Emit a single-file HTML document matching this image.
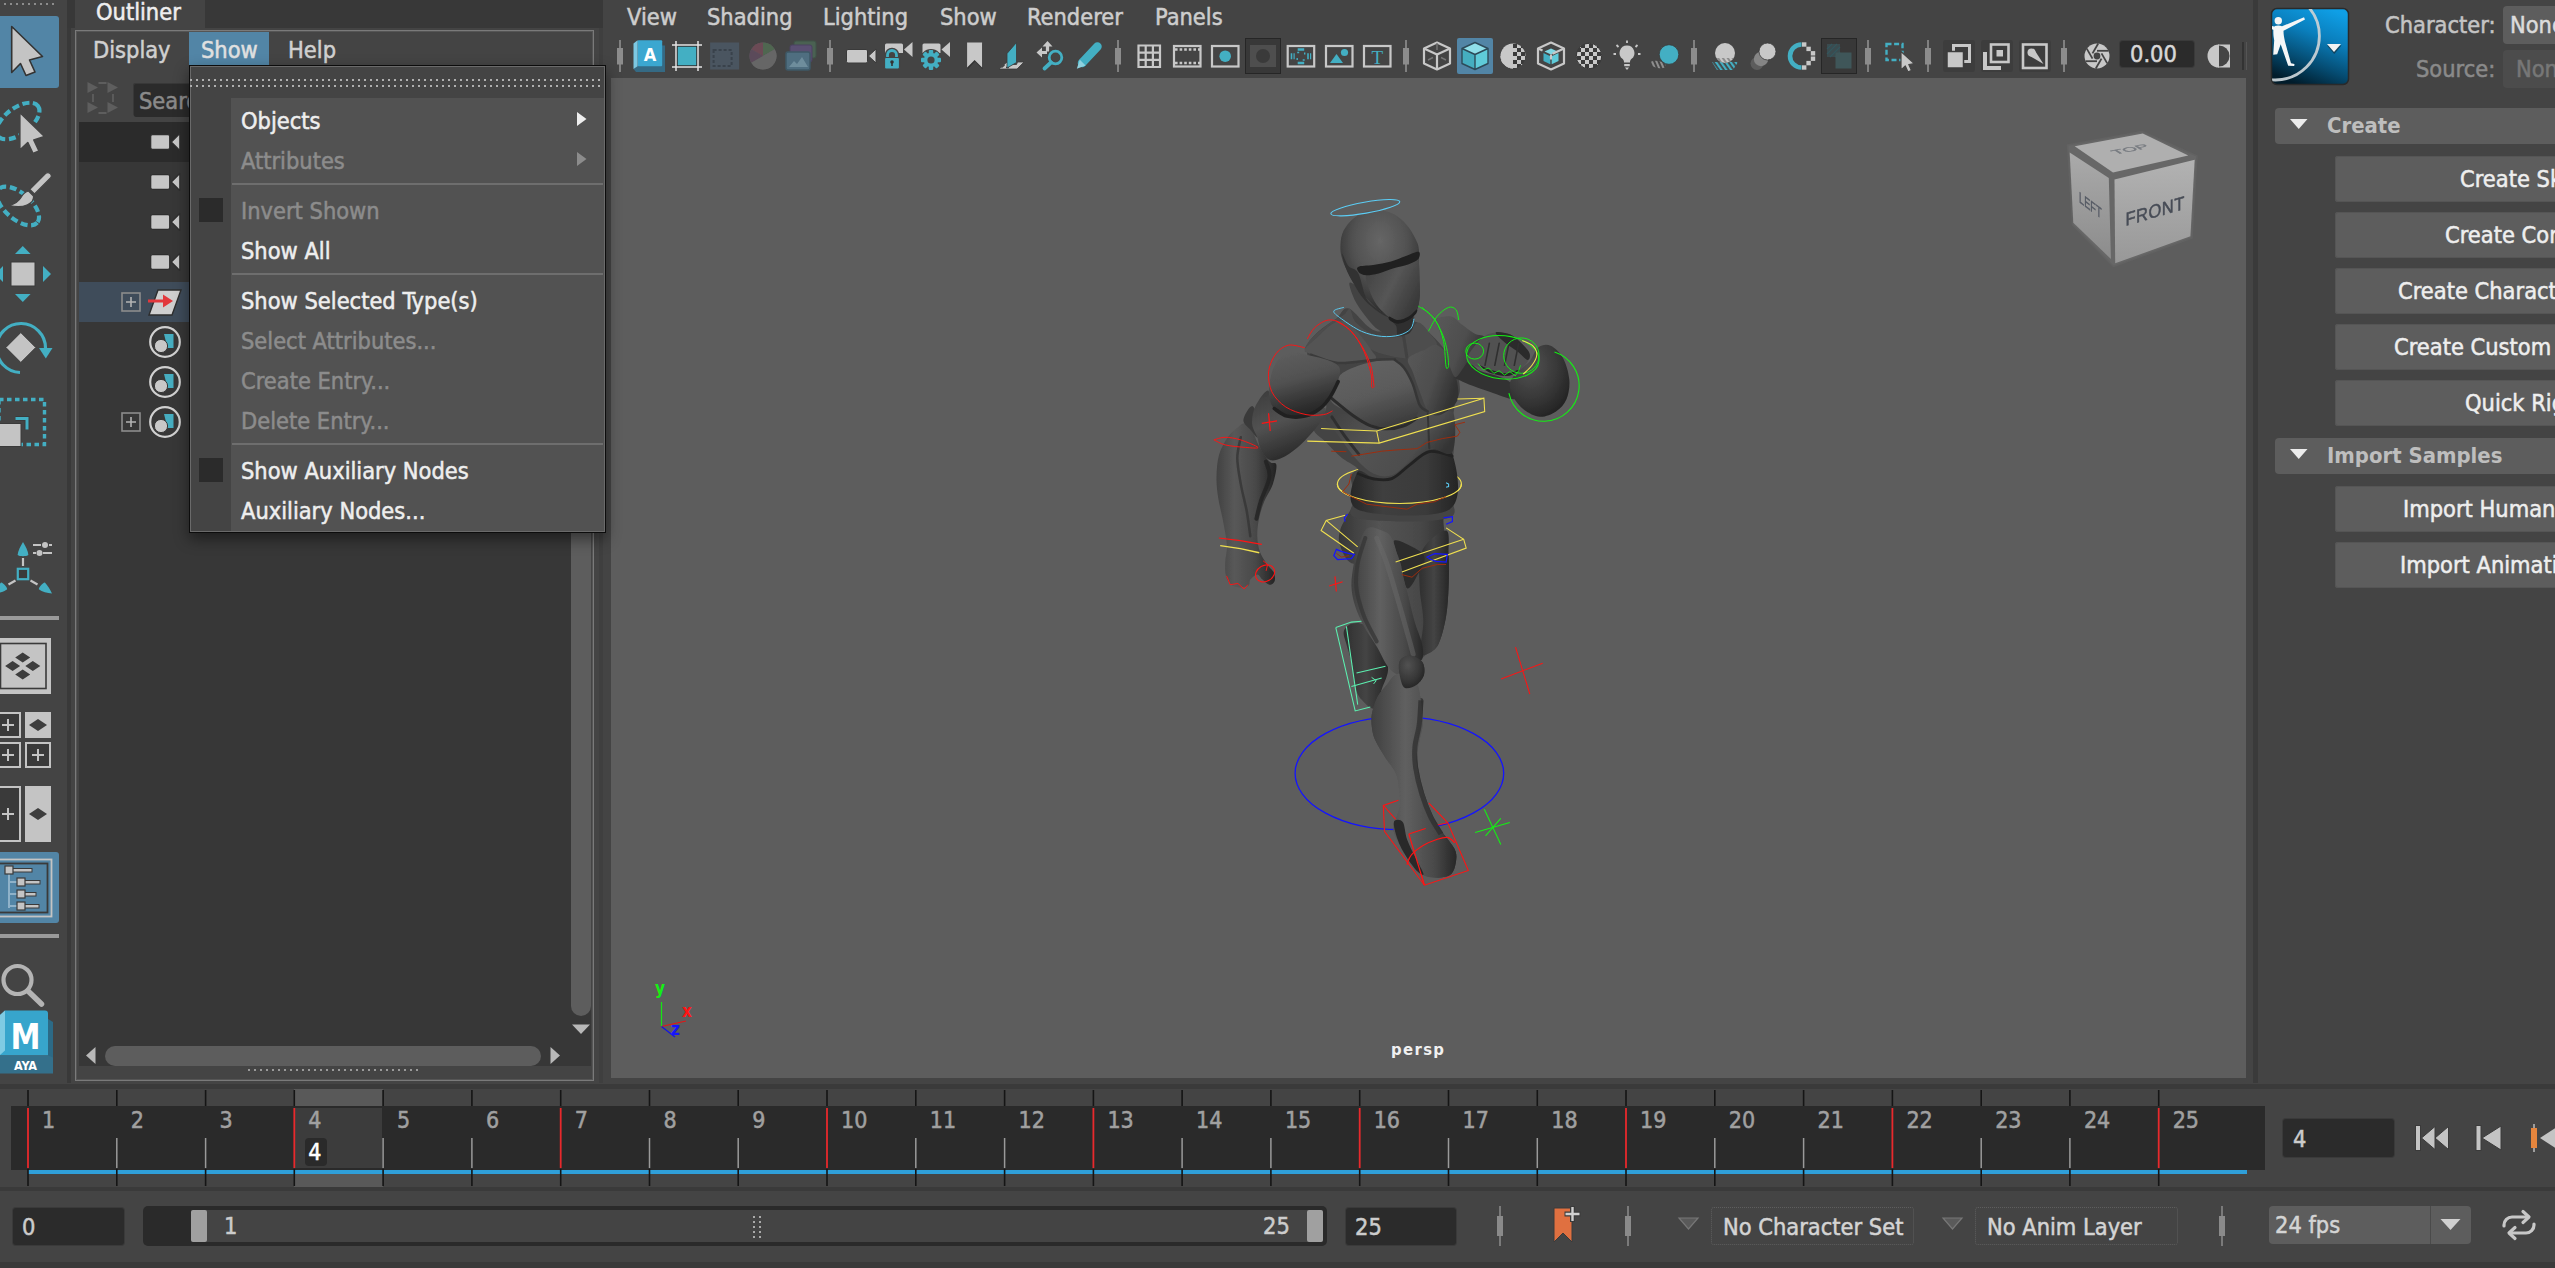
<!DOCTYPE html>
<html lang="en"><head><meta charset="utf-8"><title>Maya - Outliner Show menu</title>
<style>
*{box-sizing:border-box;margin:0;padding:0}
html,body{width:2555px;height:1268px;overflow:hidden;background:#444}
body{position:relative;font-family:"DejaVu Sans Condensed","DejaVu Sans","Liberation Sans",sans-serif;font-stretch:condensed;font-size:23.4px;color:#ccc;line-height:1;-webkit-text-stroke:.5px}
.a{position:absolute}
.t{position:absolute;white-space:nowrap;line-height:28px;height:28px}
svg{position:absolute;overflow:visible}
.btn{position:absolute;left:2335px;width:260px;height:46px;background:#5d5d5d;border-radius:3px;box-shadow:0 0 0 1px #555 inset}
.btn span{position:absolute;top:9px;white-space:nowrap;color:#eee;line-height:28px}
.mi{position:absolute;left:241px;white-space:nowrap;line-height:28px;color:#eee}
.mi.d{color:#8c8c8c}
.msep{position:absolute;left:232px;width:371px;height:2px;background:#6e6e6e}
.fn{position:absolute;top:1106px;color:#a0a0a0;font-size:23px;line-height:28px;white-space:nowrap}
.fld{position:absolute;background:#2b2b2b;border-radius:3px;color:#ccc}
</style></head><body>
<!-- ===== base panels ===== -->
<div class="a" style="left:67px;top:0;width:4px;height:1083px;background:#393939"></div>
<div class="a" style="left:67px;top:0;width:536px;height:28px;background:#383838"></div>
<div class="a" style="left:75px;top:0;width:130px;height:28px;background:#444"></div>
<div class="t" style="left:96px;top:-2px;color:#eee">Outliner</div>
<div class="a" style="left:599px;top:28px;width:4px;height:1055px;background:#3f3f3f"></div>
<div class="a" style="left:603px;top:0;width:1650px;height:1083px;background:#444"></div>
<!-- outliner frame -->
<div class="a" style="left:75px;top:30px;width:519px;height:1051px;border:1px solid #7a7a7a;box-shadow:0 0 0 1px #555 inset"></div>
<!-- viewport -->
<div class="a" id="vp" style="left:611px;top:78px;width:1635px;height:1000px;background:#5d5d5d"></div>
<!-- right divider -->
<div class="a" style="left:2253px;top:0;width:5px;height:1083px;background:#3a3a3a"></div>
<!-- band under panels -->
<div class="a" style="left:0;top:1084px;width:2555px;height:5px;background:#3a3a3a"></div>
<div class="a" style="left:0;top:1187px;width:2555px;height:4px;background:#3a3a3a"></div>
<div class="a" style="left:0;top:1262px;width:2555px;height:6px;background:#3a3a3a"></div>
<!-- ===== Tool box ===== -->
<div class="a" style="left:0;top:3px;width:56px;height:2px;background:repeating-linear-gradient(90deg,transparent 0 4px,#8c8c8c 4px 6px)"></div>
<div class="a" style="left:0;top:16px;width:59px;height:72px;background:#5285a6;border-radius:0 3px 3px 0"></div>
<div class="a" style="left:0;top:852px;width:59px;height:71px;background:#5285a6;border-radius:0 3px 3px 0"></div>
<div class="a" style="left:0;top:616px;width:59px;height:4px;background:#9a9a9a"></div>
<div class="a" style="left:0;top:934px;width:59px;height:4px;background:#9a9a9a"></div>
<svg style="left:0;top:0" width="67" height="1083" viewBox="0 0 67 1083"><path d="M11.700 26.500V72.500L20.500 63.500 26 75.500 35 72 29.500 60 42.500 56.500Z" fill="#c4c4c4" stroke="#333" stroke-width="1.6" stroke-linejoin="round"/><ellipse cx="18" cy="121" rx="25" ry="13" transform="rotate(-37 18 121)" fill="none" stroke="#43afc3" stroke-width="4.200" stroke-dasharray="7 3.500" stroke-linecap="butt"/><path d="M19.800 112.500V150L27.800 142.500 33 153.500 39 151 33.800 140 44.500 136.500Z" fill="#c4c4c4" stroke="#444" stroke-width="1.600" stroke-linejoin="round"/><ellipse cx="18" cy="206" rx="25.500" ry="13" transform="rotate(41 18 206)" fill="none" stroke="#43afc3" stroke-width="4.200" stroke-dasharray="7 3.500"/><path d="M45.500 173.500a3.300 3.300 0 0 1 4.700 4.700L34.500 194l-4.700-4.700z" fill="#c4c4c4" stroke="#444" stroke-width="1.200"/><path d="M28.500 191l5 5c1 7-9 13-24 9.500 6.500-2 9.500-4.500 11.500-8 2-3.500 4.500-6 7.500-6.500z" fill="#c4c4c4" stroke="#444" stroke-width="1.200"/><rect x="11" y="262" width="24" height="24" fill="#c4c4c4" stroke="#3a3a3a" stroke-width="1"/><g fill="#43afc3"><path d="M15 254h15.600l-7.800-8zM15 294h15.600l-7.800 8zM43 266v16l8-8zM3 266v16l-8-8z"/></g><path d="M20 372.500A24.500 24.500 0 1 1 45.500 348" fill="none" stroke="#43afc3" stroke-width="3.200"/><path d="M39 348h13.500l-6.700 10.500z" fill="#43afc3"/><path d="M20.800 332.500l15 15-15 15-15-15z" fill="#c4c4c4" stroke="#3a3a3a" stroke-width="1"/><rect x="-1" y="399.500" width="45.500" height="45" fill="none" stroke="#43afc3" stroke-width="3.400" stroke-dasharray="4.500 3.500"/><rect x="-1" y="423.500" width="22" height="23" fill="#c4c4c4" stroke="#3a3a3a" stroke-width="1"/><path d="M15.500 418.500h11.500v11" fill="none" stroke="#3a3a3a" stroke-width="5"/><path d="M15.500 418.500h11.500v11" fill="none" stroke="#43afc3" stroke-width="3"/><path d="M23 558v8M30.500 580.500l7 4M15.500 580.500l-7 4" stroke="#c4c4c4" stroke-width="2.200"/><rect x="17.800" y="568.800" width="10.400" height="10.400" fill="#3a3a3a" stroke="#43afc3" stroke-width="2.200"/><g fill="#43afc3"><path d="M23 542c2.500 4 5 9 5.400 13-2 1.600-8.800 1.600-10.800 0 .4-4 2.900-9 5.400-13z"/><path d="M52 593.500c-4.700-.2-10-1.800-13.200-4.200.300-2.600 3.700-6.200 6.100-6.800 2.700 3 5.600 7.300 7.100 11z"/><path d="M-6 593.500c4.700-.2 10-1.800 13.200-4.200-.300-2.600-3.700-6.200-6.100-6.800-2.700 3-5.600 7.300-7.100 11z"/></g><g stroke="#c4c4c4" stroke-width="2"><path d="M33 545h8M49 545h3M33 553h3M43 553h9"/></g><circle cx="45" cy="545" r="3" fill="#c4c4c4"/><circle cx="39.500" cy="553" r="3" fill="#c4c4c4"/><rect x="-2" y="638" width="53" height="56" fill="#c4c4c4"/><rect x="0.500" y="643.500" width="45.500" height="45" fill="none" stroke="#3a3a3a" stroke-width="1.600"/><g fill="#3d3d3d"><path d="M22.700 652.500l7.500 5-7.500 5-7.500-5zM22.700 669.500l7.500 5-7.500 5-7.500-5zM12.600 661l7.500 5-7.500 5-7.500-5zM32.800 661l7.500 5-7.500 5-7.500-5z"/></g><rect x="-4" y="713" width="24" height="24" fill="#3a3a3a" stroke="#c4c4c4" stroke-width="2"/><path d="M2.0 725.0h12M8.0 719.0v12" stroke="#c4c4c4" stroke-width="2"/><rect x="25" y="712" width="26" height="26" fill="#c4c4c4"/><path d="M38 719l9 6-9 6-9-6z" fill="#3d3d3d"/><rect x="-4" y="743" width="24" height="24" fill="#3a3a3a" stroke="#c4c4c4" stroke-width="2"/><path d="M2.0 755.0h12M8.0 749.0v12" stroke="#c4c4c4" stroke-width="2"/><rect x="26" y="743" width="24" height="24" fill="#3a3a3a" stroke="#c4c4c4" stroke-width="2"/><path d="M32.0 755.0h12M38.0 749.0v12" stroke="#c4c4c4" stroke-width="2"/><rect x="-4" y="787" width="24" height="54" fill="#3a3a3a" stroke="#c4c4c4" stroke-width="2"/><path d="M2.0 814.0h12M8.0 808.0v12" stroke="#c4c4c4" stroke-width="2"/><rect x="25" y="786" width="26" height="56" fill="#c4c4c4"/><path d="M38 808l9 6-9 6-9-6z" fill="#3d3d3d"/><rect x="-3" y="859.500" width="54.500" height="57" fill="none" stroke="#c4c4c4" stroke-width="1.800"/><rect x="-3" y="863.500" width="50.500" height="49" fill="none" stroke="#3a3a3a" stroke-width="1.800"/><path d="M9 872v36M9 882h8M9 894h8M9 906h8" fill="none" stroke="#8fb2c9" stroke-width="2"/><rect x="12" y="868.5" width="20" height="3.500" fill="#c4c4c4" stroke="#3a3a3a" stroke-width="1"/><rect x="5" y="866" width="8" height="8" fill="#c4c4c4" stroke="#3a3a3a" stroke-width="1.200"/><rect x="24" y="880.5" width="16" height="3.500" fill="#c4c4c4" stroke="#3a3a3a" stroke-width="1"/><rect x="17" y="878" width="8" height="8" fill="#c4c4c4" stroke="#3a3a3a" stroke-width="1.200"/><rect x="24" y="892.5" width="12" height="3.500" fill="#c4c4c4" stroke="#3a3a3a" stroke-width="1"/><rect x="17" y="890" width="8" height="8" fill="#c4c4c4" stroke="#3a3a3a" stroke-width="1.200"/><rect x="24" y="904.5" width="15" height="3.500" fill="#c4c4c4" stroke="#3a3a3a" stroke-width="1"/><rect x="17" y="902" width="8" height="8" fill="#c4c4c4" stroke="#3a3a3a" stroke-width="1.200"/><circle cx="17.500" cy="980" r="14" fill="none" stroke="#b4b4b4" stroke-width="4.200"/><path d="M28 991l13.500 13" stroke="#b4b4b4" stroke-width="5.500" stroke-linecap="round"/><path d="M0 1015l5-4.500h40a3 3 0 0 1 3 3v42h-48z" fill="#37a5cc"/><path d="M48 1019l5 3v51h-5z" fill="#2c6a86"/><path d="M0 1015l5-4.500v40l-5 4.500z" fill="#7fcbe3"/><path d="M0 1055.500h48l5 2v16h-53z" fill="#34708b"/><text x="25.500" y="1049" font-family="DejaVu Sans,Liberation Sans,sans-serif" font-weight="bold" font-size="35" text-anchor="middle" fill="#fff" textLength="30" lengthAdjust="spacingAndGlyphs">M</text><text x="25.500" y="1070" font-family="DejaVu Sans,Liberation Sans,sans-serif" font-weight="bold" font-size="12.500" text-anchor="middle" fill="#fff">AYA</text></svg>
<!-- ===== Outliner ===== -->
<div class="t" style="left:93px;top:35.500px;color:#d0d0d0">Display</div>
<div class="a" style="left:189px;top:32px;width:80px;height:33px;background:#5285a6"></div>
<div class="t" style="left:201px;top:35.500px;color:#e0e0e0">Show</div>
<div class="t" style="left:288px;top:35.500px;color:#d0d0d0">Help</div>
<svg style="left:86px;top:80px" width="34" height="36" viewBox="0 0 34 36"><g fill="#5e5e5e"><path d="M1.500 2l10.500 5.500-10.500 5.500zM21.500 2l10.500 5.500-10.500 5.500zM1.500 22l10.500 5.500-10.500 5.500zM21.500 22l10.500 5.500-10.500 5.500z"/></g><path d="M12.500 3h8M12.500 33h8M7 14v8M27 14v8" stroke="#5e5e5e" stroke-width="1.800" fill="none"/></svg>
<div class="a" style="left:134px;top:84px;width:440px;height:33px;background:#2b2b2b;border-radius:2px;box-shadow:-1px -1px 0 0 #383838"></div>
<div class="t" style="left:139px;top:87.300px;color:#8a8a8a">Search...</div>
<div class="a" style="left:79px;top:122px;width:492px;height:920px;background:#373737"></div>
<div class="a" style="left:79px;top:122px;width:492px;height:40px;background:#2b2b2b"></div>
<div class="a" style="left:79px;top:282px;width:492px;height:40px;background:#3f4c5a"></div>
<div class="t" style="left:196px;top:126px;color:#ccc">persp</div>
<div class="t" style="left:196px;top:166px;color:#ccc">top</div>
<div class="t" style="left:196px;top:206px;color:#ccc">front</div>
<div class="t" style="left:196px;top:246px;color:#ccc">side</div>
<div class="t" style="left:196px;top:286px;color:#eee">Character1_Ctrl_Reference</div>
<div class="t" style="left:196px;top:326px;color:#ccc">defaultLightSet</div>
<div class="t" style="left:196px;top:366px;color:#ccc">defaultObjectSet</div>
<div class="t" style="left:196px;top:406px;color:#ccc">Character1_Ctrl</div>
<svg style="left:149px;top:132px" width="34" height="20" viewBox="0 0 34 20"><rect x="1.700" y="2.600" width="19" height="14.800" rx="1.800" fill="#c6c6c6" stroke="#2e2e2e" stroke-width="1.200"/><path d="M22.300 10l8.500-8.500v17z" fill="#c6c6c6" stroke="#2e2e2e" stroke-width="1.200" stroke-linejoin="round"/></svg>
<svg style="left:149px;top:172px" width="34" height="20" viewBox="0 0 34 20"><rect x="1.700" y="2.600" width="19" height="14.800" rx="1.800" fill="#c6c6c6" stroke="#2e2e2e" stroke-width="1.200"/><path d="M22.300 10l8.500-8.500v17z" fill="#c6c6c6" stroke="#2e2e2e" stroke-width="1.200" stroke-linejoin="round"/></svg>
<svg style="left:149px;top:212px" width="34" height="20" viewBox="0 0 34 20"><rect x="1.700" y="2.600" width="19" height="14.800" rx="1.800" fill="#c6c6c6" stroke="#2e2e2e" stroke-width="1.200"/><path d="M22.300 10l8.500-8.500v17z" fill="#c6c6c6" stroke="#2e2e2e" stroke-width="1.200" stroke-linejoin="round"/></svg>
<svg style="left:149px;top:252px" width="34" height="20" viewBox="0 0 34 20"><rect x="1.700" y="2.600" width="19" height="14.800" rx="1.800" fill="#c6c6c6" stroke="#2e2e2e" stroke-width="1.200"/><path d="M22.300 10l8.500-8.500v17z" fill="#c6c6c6" stroke="#2e2e2e" stroke-width="1.200" stroke-linejoin="round"/></svg>
<svg style="left:121px;top:292px" width="20" height="20" viewBox="0 0 20 20"><rect x="1" y="1" width="18" height="18" fill="none" stroke="#8c8c8c" stroke-width="1.6"/><path d="M5 10h10M10 5v10" stroke="#b4b4b4" stroke-width="1.6"/></svg>
<svg style="left:121px;top:412px" width="20" height="20" viewBox="0 0 20 20"><rect x="1" y="1" width="18" height="18" fill="none" stroke="#8c8c8c" stroke-width="1.6"/><path d="M5 10h10M10 5v10" stroke="#b4b4b4" stroke-width="1.6"/></svg>
<svg style="left:146px;top:286px" width="38" height="32" viewBox="0 0 38 32"><path d="M12 4h23l-9 25h-23z" fill="#cfcfcf" stroke="#2e2e2e" stroke-width="1.4"/><path d="M2 15h17" stroke="#e2383c" stroke-width="3"/><path d="M17 8.5l10 6.5-10 6.5z" fill="#e2383c"/></svg>
<svg style="left:148px;top:325px" width="34" height="34" viewBox="0 0 34 34"><circle cx="17" cy="17" r="14.8" fill="#373737" stroke="#d0d0d0" stroke-width="2.2"/><path d="M16 9h9.5v14h-6z" fill="#46adc0"/><circle cx="13" cy="21" r="6.6" fill="#c8c8c8" stroke="#373737" stroke-width="1"/></svg>
<svg style="left:148px;top:365px" width="34" height="34" viewBox="0 0 34 34"><circle cx="17" cy="17" r="14.8" fill="#373737" stroke="#d0d0d0" stroke-width="2.2"/><path d="M16 9h9.5v14h-6z" fill="#46adc0"/><circle cx="13" cy="21" r="6.6" fill="#c8c8c8" stroke="#373737" stroke-width="1"/></svg>
<svg style="left:148px;top:405px" width="34" height="34" viewBox="0 0 34 34"><circle cx="17" cy="17" r="14.8" fill="#373737" stroke="#d0d0d0" stroke-width="2.2"/><path d="M16 9h9.5v14h-6z" fill="#46adc0"/><circle cx="13" cy="21" r="6.6" fill="#c8c8c8" stroke="#373737" stroke-width="1"/></svg>
<div class="a" style="left:571px;top:122px;width:20px;height:920px;background:#373737"></div>
<div class="a" style="left:571px;top:110px;width:20px;height:906px;background:#5d5d5d;border-radius:10px"></div>
<svg style="left:571px;top:1023px" width="20" height="12" viewBox="0 0 20 12"><path d="M1 1.5h18l-9 9.5z" fill="#b8b8b8"/></svg>
<div class="a" style="left:79px;top:1042px;width:512px;height:24px;background:#373737"></div>
<div class="a" style="left:105px;top:1046px;width:436px;height:20px;background:#5d5d5d;border-radius:10px"></div>
<svg style="left:85px;top:1046px" width="12" height="20" viewBox="0 0 12 20"><path d="M10.5 1v17l-9.5-8.5z" fill="#b8b8b8"/></svg>
<svg style="left:549px;top:1046px" width="12" height="20" viewBox="0 0 12 20"><path d="M1.5 1v17l9.5-8.5z" fill="#b8b8b8"/></svg>
<div class="a" style="left:248px;top:1069px;width:172px;height:2px;background:repeating-linear-gradient(90deg,#9a9a9a 0 2px,transparent 2px 6px)"></div>
<!-- ===== Show menu popup ===== -->
<div class="a" style="left:189px;top:65px;width:417px;height:468px;background:#525252;border:1px solid #0c0c0c;box-shadow:0 6px 14px rgba(0,0,0,.45), 0 0 0 1px #6a6a6a inset"></div>
<div class="a" style="left:191px;top:67px;width:413px;height:31px;background:#444"></div>
<div class="a" style="left:191px;top:98px;width:40px;height:433px;background:#444"></div>
<div class="a" style="left:190px;top:79px;width:413px;height:2px;background:repeating-linear-gradient(90deg,#b0b0b0 0 2px,transparent 2px 6px)"></div>
<div class="a" style="left:190px;top:85px;width:413px;height:2px;background:repeating-linear-gradient(90deg,#b0b0b0 0 2px,transparent 2px 6px)"></div>
<div class="mi" style="top:107.3px">Objects</div>
<div class="mi d" style="top:147.3px">Attributes</div>
<div class="mi d" style="top:197.3px">Invert Shown</div>
<div class="mi" style="top:237.3px">Show All</div>
<div class="mi" style="top:287.3px">Show Selected Type(s)</div>
<div class="mi d" style="top:327.3px">Select Attributes...</div>
<div class="mi d" style="top:367.3px">Create Entry...</div>
<div class="mi d" style="top:407.3px">Delete Entry...</div>
<div class="mi" style="top:457.3px">Show Auxiliary Nodes</div>
<div class="mi" style="top:497.3px">Auxiliary Nodes...</div>
<div class="msep" style="top:183px"></div>
<div class="msep" style="top:273px"></div>
<div class="msep" style="top:443px"></div>
<div class="a" style="left:199px;top:198px;width:24px;height:24px;background:#2b2b2b"></div>
<div class="a" style="left:199px;top:458px;width:24px;height:24px;background:#2b2b2b"></div>
<svg style="left:576px;top:111px" width="12" height="16" viewBox="0 0 12 16"><path d="M1 1l9.5 7-9.5 7z" fill="#eee"/></svg>
<svg style="left:576px;top:151px" width="12" height="16" viewBox="0 0 12 16"><path d="M1 1l9.5 7-9.5 7z" fill="#8c8c8c"/></svg>
<!-- ===== Time slider ===== -->
<div class="a" style="left:294.3px;top:1089px;width:88.8px;height:98px;background:#595959"></div>
<div class="a" style="left:11px;top:1106px;width:2254px;height:64px;background:#2a2a2a"></div>
<div class="a" style="left:294.3px;top:1108px;width:87.8px;height:60px;background:#3c3c3c"></div>
<div class="a" style="left:28px;top:1170px;width:2219px;height:4px;background:#2f9fd9"></div>
<svg style="left:0;top:1088px" width="2555" height="100" viewBox="0 1088 2555 100"><path d="M28.0 1090V1106M28.0 1169V1186" stroke="#151515" stroke-width="1.6"/><path d="M28.0 1108V1168" stroke="#e8292c" stroke-width="1.8"/><path d="M116.8 1090V1106M116.8 1169V1186" stroke="#151515" stroke-width="1.6"/><path d="M116.8 1138V1168" stroke="#9a9a9a" stroke-width="1.5"/><path d="M205.6 1090V1106M205.6 1169V1186" stroke="#151515" stroke-width="1.6"/><path d="M205.6 1138V1168" stroke="#9a9a9a" stroke-width="1.5"/><path d="M294.3 1090V1106M294.3 1169V1186" stroke="#151515" stroke-width="1.6"/><path d="M294.3 1108V1168" stroke="#e8292c" stroke-width="1.8"/><path d="M383.1 1090V1106M383.1 1169V1186" stroke="#151515" stroke-width="1.6"/><path d="M383.1 1138V1168" stroke="#9a9a9a" stroke-width="1.5"/><path d="M471.9 1090V1106M471.9 1169V1186" stroke="#151515" stroke-width="1.6"/><path d="M471.9 1138V1168" stroke="#9a9a9a" stroke-width="1.5"/><path d="M560.7 1090V1106M560.7 1169V1186" stroke="#151515" stroke-width="1.6"/><path d="M560.7 1108V1168" stroke="#e8292c" stroke-width="1.8"/><path d="M649.5 1090V1106M649.5 1169V1186" stroke="#151515" stroke-width="1.6"/><path d="M649.5 1138V1168" stroke="#9a9a9a" stroke-width="1.5"/><path d="M738.2 1090V1106M738.2 1169V1186" stroke="#151515" stroke-width="1.6"/><path d="M738.2 1138V1168" stroke="#9a9a9a" stroke-width="1.5"/><path d="M827.0 1090V1106M827.0 1169V1186" stroke="#151515" stroke-width="1.6"/><path d="M827.0 1108V1168" stroke="#e8292c" stroke-width="1.8"/><path d="M915.8 1090V1106M915.8 1169V1186" stroke="#151515" stroke-width="1.6"/><path d="M915.8 1138V1168" stroke="#9a9a9a" stroke-width="1.5"/><path d="M1004.6 1090V1106M1004.6 1169V1186" stroke="#151515" stroke-width="1.6"/><path d="M1004.6 1138V1168" stroke="#9a9a9a" stroke-width="1.5"/><path d="M1093.4 1090V1106M1093.4 1169V1186" stroke="#151515" stroke-width="1.6"/><path d="M1093.4 1108V1168" stroke="#e8292c" stroke-width="1.8"/><path d="M1182.1 1090V1106M1182.1 1169V1186" stroke="#151515" stroke-width="1.6"/><path d="M1182.1 1138V1168" stroke="#9a9a9a" stroke-width="1.5"/><path d="M1270.9 1090V1106M1270.9 1169V1186" stroke="#151515" stroke-width="1.6"/><path d="M1270.9 1138V1168" stroke="#9a9a9a" stroke-width="1.5"/><path d="M1359.7 1090V1106M1359.7 1169V1186" stroke="#151515" stroke-width="1.6"/><path d="M1359.7 1108V1168" stroke="#e8292c" stroke-width="1.8"/><path d="M1448.5 1090V1106M1448.5 1169V1186" stroke="#151515" stroke-width="1.6"/><path d="M1448.5 1138V1168" stroke="#9a9a9a" stroke-width="1.5"/><path d="M1537.3 1090V1106M1537.3 1169V1186" stroke="#151515" stroke-width="1.6"/><path d="M1537.3 1138V1168" stroke="#9a9a9a" stroke-width="1.5"/><path d="M1626.0 1090V1106M1626.0 1169V1186" stroke="#151515" stroke-width="1.6"/><path d="M1626.0 1108V1168" stroke="#e8292c" stroke-width="1.8"/><path d="M1714.8 1090V1106M1714.8 1169V1186" stroke="#151515" stroke-width="1.6"/><path d="M1714.8 1138V1168" stroke="#9a9a9a" stroke-width="1.5"/><path d="M1803.6 1090V1106M1803.6 1169V1186" stroke="#151515" stroke-width="1.6"/><path d="M1803.6 1138V1168" stroke="#9a9a9a" stroke-width="1.5"/><path d="M1892.4 1090V1106M1892.4 1169V1186" stroke="#151515" stroke-width="1.6"/><path d="M1892.4 1108V1168" stroke="#e8292c" stroke-width="1.8"/><path d="M1981.2 1090V1106M1981.2 1169V1186" stroke="#151515" stroke-width="1.6"/><path d="M1981.2 1138V1168" stroke="#9a9a9a" stroke-width="1.5"/><path d="M2069.9 1090V1106M2069.9 1169V1186" stroke="#151515" stroke-width="1.6"/><path d="M2069.9 1138V1168" stroke="#9a9a9a" stroke-width="1.5"/><path d="M2158.7 1090V1106M2158.7 1169V1186" stroke="#151515" stroke-width="1.6"/><path d="M2158.7 1108V1168" stroke="#e8292c" stroke-width="1.8"/></svg>
<div class="fn" style="left:42.0px">1</div>
<div class="fn" style="left:130.8px">2</div>
<div class="fn" style="left:219.6px">3</div>
<div class="fn" style="left:308.3px">4</div>
<div class="fn" style="left:397.1px">5</div>
<div class="fn" style="left:485.9px">6</div>
<div class="fn" style="left:574.7px">7</div>
<div class="fn" style="left:663.5px">8</div>
<div class="fn" style="left:752.2px">9</div>
<div class="fn" style="left:841.0px">10</div>
<div class="fn" style="left:929.8px">11</div>
<div class="fn" style="left:1018.6px">12</div>
<div class="fn" style="left:1107.4px">13</div>
<div class="fn" style="left:1196.1px">14</div>
<div class="fn" style="left:1284.9px">15</div>
<div class="fn" style="left:1373.7px">16</div>
<div class="fn" style="left:1462.5px">17</div>
<div class="fn" style="left:1551.3px">18</div>
<div class="fn" style="left:1640.0px">19</div>
<div class="fn" style="left:1728.8px">20</div>
<div class="fn" style="left:1817.6px">21</div>
<div class="fn" style="left:1906.4px">22</div>
<div class="fn" style="left:1995.2px">23</div>
<div class="fn" style="left:2083.9px">24</div>
<div class="fn" style="left:2172.7px">25</div>
<div class="a" style="left:305px;top:1138px;width:22px;height:28px;background:#2a2a2a;border-radius:4px"></div>
<div class="fn" style="left:308.3px;top:1138px;color:#fff">4</div>
<div class="fld" style="left:2283px;top:1119px;width:111px;height:38px;box-shadow:0 0 0 1px #3a3a3a"></div>
<div class="t" style="left:2293px;top:1125px;color:#ccc">4</div>
<svg style="left:2414px;top:1124px" width="150" height="28" viewBox="0 0 150 28"><g fill="#c4c4c4" stroke="#3a3a3a" stroke-width="1"><rect x="1.5" y="1.5" width="5" height="25"/><path d="M7.5 14l13.5-11.5v23zM21 14l13.5-11.5v23z"/><rect x="62" y="1.5" width="5" height="25"/><path d="M68 14l19-12v24z"/></g><path d="M120 0v28" stroke="#bbb" stroke-width="1.5"/><rect x="117" y="4" width="6" height="20" fill="#e5853d"/><path d="M126 14l20-13v26z" fill="#c4c4c4"/></svg>
<!-- ===== Range slider ===== -->
<div class="fld" style="left:13px;top:1208px;width:111px;height:37px;box-shadow:0 0 0 1px #3a3a3a"></div><div class="t" style="left:22px;top:1213px">0</div>
<div class="a" style="left:143px;top:1206px;width:1184px;height:40px;background:#2a2a2a;border-radius:5px"></div>
<div class="a" style="left:191px;top:1210px;width:1132px;height:32px;background:#444;border-radius:3px"></div>
<div class="a" style="left:191px;top:1210px;width:16px;height:32px;background:#a0a0a0;border-radius:2px"></div>
<div class="a" style="left:1307px;top:1210px;width:16px;height:32px;background:#a0a0a0;border-radius:2px"></div>
<div class="t" style="left:224px;top:1212px">1</div><div class="t" style="left:1263px;top:1212px">25</div>
<div class="a" style="left:753px;top:1216px;width:2px;height:22px;background:repeating-linear-gradient(180deg,#aaa 0 2px,transparent 2px 5px)"></div>
<div class="a" style="left:759px;top:1216px;width:2px;height:22px;background:repeating-linear-gradient(180deg,#aaa 0 2px,transparent 2px 5px)"></div>
<div class="fld" style="left:1346px;top:1208px;width:110px;height:37px;box-shadow:0 0 0 1px #3a3a3a"></div><div class="t" style="left:1355px;top:1213px">25</div>
<div class="a" style="left:1499px;top:1206px;width:2px;height:40px;background:#7a7a7a"></div><div class="a" style="left:1497px;top:1216px;width:6px;height:20px;background:#8a8a8a"></div>
<div class="a" style="left:1627px;top:1206px;width:2px;height:40px;background:#7a7a7a"></div><div class="a" style="left:1625px;top:1216px;width:6px;height:20px;background:#8a8a8a"></div>
<div class="a" style="left:2221px;top:1206px;width:2px;height:40px;background:#7a7a7a"></div><div class="a" style="left:2219px;top:1216px;width:6px;height:20px;background:#8a8a8a"></div>
<svg style="left:1551px;top:1204px" width="36" height="42" viewBox="0 0 36 42"><path d="M3 4h18v34l-9-9-9 9z" fill="#e07040" stroke="#3a3a3a" stroke-width="1"/><path d="M21.500 2v16M13.500 10h16" stroke="#3a3a3a" stroke-width="5"/><path d="M21.500 3v14M14.500 10h14" stroke="#d0d0d0" stroke-width="2.4"/></svg>
<svg style="left:1678px;top:1217px" width="22" height="14" viewBox="0 0 22 14"><path d="M1 1h19l-9.500 11z" fill="#5a5a5a" stroke="#777" stroke-width="1.2"/></svg>
<svg style="left:1942px;top:1217px" width="22" height="14" viewBox="0 0 22 14"><path d="M1 1h19l-9.500 11z" fill="#5a5a5a" stroke="#777" stroke-width="1.2"/></svg>
<div class="a" style="left:1711px;top:1207px;width:203px;height:38px;border:1px dotted #5e5e5e;border-radius:3px"></div><div class="t" style="left:1723px;top:1213px;color:#d4d4d4">No Character Set</div>
<div class="a" style="left:1975px;top:1207px;width:203px;height:38px;border:1px dotted #5e5e5e;border-radius:3px"></div><div class="t" style="left:1987px;top:1213px;color:#d4d4d4">No Anim Layer</div>
<div class="a" style="left:2269px;top:1206px;width:202px;height:38px;background:#5d5d5d;border-radius:4px"></div><div class="a" style="left:2430px;top:1206px;width:1px;height:38px;background:#4a4a4a"></div>
<div class="t" style="left:2275px;top:1211px;color:#d4d4d4">24 fps</div>
<svg style="left:2439px;top:1218px" width="24" height="14" viewBox="0 0 24 14"><path d="M1.500 1h20l-10 11z" fill="#d0d0d0"/></svg>
<svg style="left:2500px;top:1208px" width="38" height="34" viewBox="0 0 38 34"><g fill="none" stroke="#c8c8c8" stroke-width="3.2" stroke-linecap="round" stroke-linejoin="round"><path d="M27 9h-15a8 8 0 0 0-8 8v1M11 25h15a8 8 0 0 0 8-8v-1"/><path d="M23 3.500l6 5.500-6 5.500M15 19.500l-6 5.500 6 5.500"/></g></svg>
<!-- ===== HumanIK panel ===== -->
<svg style="left:2271px;top:8px" width="79" height="78" viewBox="0 0 79 78"><defs><linearGradient id="hg" x1="0.75" y1="0" x2="0.35" y2="1"><stop offset="0" stop-color="#0f9fe6"/><stop offset="0.35" stop-color="#0a7fbd"/><stop offset="0.7" stop-color="#054c72"/><stop offset="1" stop-color="#011c2b"/></linearGradient><clipPath id="hc"><rect x="1" y="1" width="76" height="75" rx="5"/></clipPath></defs><rect x="0.500" y="0.500" width="77" height="76" rx="5.500" fill="url(#hg)" stroke="#2a2a2a" stroke-width="1.500"/><g clip-path="url(#hc)"><circle cx="4.400" cy="28" r="44" fill="none" stroke="#c6d0d5" stroke-width="2.800" opacity=".95"/><g fill="#f4f6f7"><circle cx="7.300" cy="12.700" r="3.700"/><path d="M4 18c2-.8 5-.8 7 .3l22-9 1 2.300-21.500 11.200c0 4 .8 7.500 1.500 11l6 21.500 3.500.7-.3 2-6-.2-7.500-21.500-3.500 10-4 .5 1-14.500c-1-5-1-9-.7-12z"/><path d="M5 19l-8-2 .5 3 8 3z"/></g></g><path d="M56 37.500h14.500l-7.250 8.500z" fill="#1a1a1a" opacity=".5"/><path d="M56 36h14l-7 8z" fill="#f2f2f2"/></svg>
<div class="t" style="left:2385px;top:11px;color:#c4c4c4">Character:</div>
<div class="a" style="left:2503px;top:6px;width:80px;height:38px;background:#5d5d5d;border-radius:4px"></div><div class="t" style="left:2510px;top:11px;color:#dcdcdc">None</div>
<div class="t" style="left:2416px;top:55px;color:#8a8a8a">Source:</div>
<div class="a" style="left:2503px;top:50px;width:80px;height:38px;background:#4c4c4c;border-radius:4px"></div><div class="t" style="left:2516px;top:55px;color:#777">None</div>
<div class="a" style="left:2275px;top:108px;width:300px;height:36px;background:#5d5d5d;border-radius:4px"></div>
<svg style="left:2289px;top:118px" width="20" height="12" viewBox="0 0 20 12"><path d="M1 1h17.500l-8.750 10z" fill="#ececec"/></svg>
<div class="t" style="left:2327px;top:112px;color:#bebebe;font-weight:bold;font-size:21.900px;-webkit-text-stroke:0">Create</div>
<div class="a" style="left:2275px;top:438px;width:300px;height:36px;background:#5d5d5d;border-radius:4px"></div>
<svg style="left:2289px;top:448px" width="20" height="12" viewBox="0 0 20 12"><path d="M1 1h17.500l-8.750 10z" fill="#ececec"/></svg>
<div class="t" style="left:2327px;top:442px;color:#bebebe;font-weight:bold;font-size:21.900px;-webkit-text-stroke:0">Import Samples</div>
<div class="btn" style="top:156px"><span style="left:125px">Create Skeleton</span></div>
<div class="btn" style="top:212px"><span style="left:110px">Create Control Rig</span></div>
<div class="btn" style="top:268px"><span style="left:63px">Create Character Definition</span></div>
<div class="btn" style="top:324px"><span style="left:59px">Create Custom Rig Mapping</span></div>
<div class="btn" style="top:380px"><span style="left:130px">Quick Rig Tool</span></div>
<div class="btn" style="top:486px"><span style="left:68px">Import HumanIK Example</span></div>
<div class="btn" style="top:542px"><span style="left:65px">Import Animation Example</span></div>
<!-- ===== Viewport panel menu + toolbar ===== -->
<div class="t" style="left:627px;top:3px;color:#cdcdcd">View</div>
<div class="t" style="left:707px;top:3px;color:#cdcdcd">Shading</div>
<div class="t" style="left:823px;top:3px;color:#cdcdcd">Lighting</div>
<div class="t" style="left:940px;top:3px;color:#cdcdcd">Show</div>
<div class="t" style="left:1027px;top:3px;color:#cdcdcd">Renderer</div>
<div class="t" style="left:1155px;top:3px;color:#cdcdcd">Panels</div>
<svg style="left:0;top:36px" width="2260" height="42" viewBox="0 36 2260 42"><defs><pattern id="chk" width="8" height="8" patternUnits="userSpaceOnUse"><rect width="8" height="8" fill="#3a3a3a"/><rect width="4" height="4" fill="#c8c8c8"/><rect x="4" y="4" width="4" height="4" fill="#c8c8c8"/></pattern><pattern id="hat" width="4" height="4" patternUnits="userSpaceOnUse" patternTransform="rotate(-35)"><rect width="4" height="4" fill="none"/><rect width="2.200" height="4" fill="#43afc3"/></pattern><pattern id="hat2" width="4" height="4" patternUnits="userSpaceOnUse" patternTransform="rotate(-35)"><rect width="2" height="4" fill="#8e8e8e"/></pattern></defs><path d="M620 40V72" stroke="#808080" stroke-width="2"/><rect x="617" y="48" width="6" height="16.500" fill="#8c8c8c"/><path d="M830 40V72" stroke="#808080" stroke-width="2"/><rect x="827" y="48" width="6" height="16.500" fill="#8c8c8c"/><path d="M1118 40V72" stroke="#808080" stroke-width="2"/><rect x="1115" y="48" width="6" height="16.500" fill="#8c8c8c"/><path d="M1406 40V72" stroke="#808080" stroke-width="2"/><rect x="1403" y="48" width="6" height="16.500" fill="#8c8c8c"/><path d="M1694 40V72" stroke="#808080" stroke-width="2"/><rect x="1691" y="48" width="6" height="16.500" fill="#8c8c8c"/><path d="M1868 40V72" stroke="#808080" stroke-width="2"/><rect x="1865" y="48" width="6" height="16.500" fill="#8c8c8c"/><path d="M1928 40V72" stroke="#808080" stroke-width="2"/><rect x="1925" y="48" width="6" height="16.500" fill="#8c8c8c"/><path d="M2064 40V72" stroke="#808080" stroke-width="2"/><rect x="2061" y="48" width="6" height="16.500" fill="#8c8c8c"/><path d="M2243 42V70" stroke="#333" stroke-width="2"/><path d="M2246.500 42V70" stroke="#555" stroke-width="1"/><rect x="1245.5" y="38.500" width="35" height="35" fill="#383838" stroke="#262626" stroke-width="1"/><rect x="1821.5" y="38.500" width="35" height="35" fill="#383838" stroke="#262626" stroke-width="1"/><rect x="1457" y="38" width="36" height="36" rx="2" fill="#5285a6"/><rect x="1943" y="40" width="32" height="32" rx="3" fill="#3d3d3d"/><rect x="1981" y="40" width="32" height="32" rx="3" fill="#3d3d3d"/><rect x="2019" y="40" width="32" height="32" rx="3" fill="#3d3d3d"/><g transform="translate(633.5 40)"><path d="M2.500 32H31.500V5.500H28V26H4.100L0 29Z" fill="#356a84"/><rect x="4.100" y=".200" width="24.600" height="26" rx="1" fill="#3ba7d0"/><path d="M0 3.500L4.100 .200V26.200L0 29Z" fill="#7cc8e2"/><text x="16.500" y="20.500" font-family="DejaVu Sans,Liberation Sans,sans-serif" font-weight="bold" font-size="18" text-anchor="middle" fill="#fff">A</text></g><g transform="translate(671 40)"><rect x="6" y="6" width="20" height="20" fill="#43afc3" stroke="#2e2e2e" stroke-width="1.500"/><path d="M5 1v30M27 1v30M1 5h30M1 27h30" stroke="#e4e4e4" stroke-width="1.500"/></g><g transform="translate(708.6 40)"><rect x="1.500" y="2.500" width="29" height="27" fill="#4a5560"/><rect x="5" y="10" width="18" height="16" fill="none" stroke="#39424b" stroke-width="2" stroke-dasharray="3 2"/></g><g transform="translate(747 40)"><circle cx="16" cy="16" r="13.500" fill="#5f5f5f"/><path d="M16 16L16 2.500A13.500 13.500 0 0 0 4.300 9.250z" fill="#6b4a55"/><path d="M16 16L16 2.500A13.500 13.500 0 0 1 27.700 9.250z" fill="#4f6650"/><path d="M16 16L4.300 9.250A13.500 13.500 0 0 0 4.300 22.750z" fill="#5b4a5a"/><path d="M16 16L27.700 9.250L4.300 22.750A13.500 13.500 0 0 0 27.700 22.750A13.500 13.500 0 0 0 27.700 9.250z" fill="#666"/></g><g transform="translate(785 40)"><rect x="9" y="1" width="22" height="17" rx="2" fill="#4a6152" stroke="#3f5246" stroke-width="1"/><rect x="5" y="5" width="22" height="17" rx="2" fill="#5a4f72" stroke="#4a4260" stroke-width="1"/><rect x="1" y="12" width="24" height="18" rx="2" fill="#4f6e80" stroke="#3e5866" stroke-width="1.500"/><path d="M4 27l5-6 3 3 5-7 6 10z" fill="#6e8d9c"/></g><g transform="translate(845 40)"><rect x="1.500" y="9.500" width="21" height="13.500" rx="1.500" fill="#c8c8c8" stroke="#3a3a3a" stroke-width="1"/><path d="M23.500 16l7.500-7v14z" fill="#c8c8c8" stroke="#3a3a3a" stroke-width="1"/></g><g transform="translate(883 40)"><path d="M2 5a1.500 1.500 0 0 1 1.500-1.500h15a1.500 1.500 0 0 1 1.500 1.500v8h-18z" fill="#c8c8c8"/><path d="M21 9.500l8.500-7.500v15z" fill="#c8c8c8"/><path d="M4.500 18v-3a4.500 4.500 0 0 1 9 0v3" fill="none" stroke="#444" stroke-width="5.500"/><path d="M4.500 18v-3a4.500 4.500 0 0 1 9 0v3" fill="none" stroke="#43afc3" stroke-width="2.800"/><rect x="1.500" y="17.500" width="15" height="11.500" rx="1.500" fill="#43afc3" stroke="#444" stroke-width="1.200"/><circle cx="9" cy="22" r="1.800" fill="#333"/><path d="M9 22v4" stroke="#333" stroke-width="1.600"/></g><g transform="translate(920.5 40)"><path d="M2 5a1.500 1.500 0 0 1 1.500-1.500h15a1.500 1.500 0 0 1 1.500 1.500v8h-18z" fill="#c8c8c8"/><path d="M21 9.500l8.500-7.500v15z" fill="#c8c8c8"/><circle cx="10.500" cy="20" r="11" fill="#444"/><g transform="translate(10.500 20)" fill="#43afc3"><rect x="-2.200" y="-10" width="4.400" height="20" rx="1" transform="rotate(0)"/><rect x="-2.200" y="-10" width="4.400" height="20" rx="1" transform="rotate(45)"/><rect x="-2.200" y="-10" width="4.400" height="20" rx="1" transform="rotate(90)"/><rect x="-2.200" y="-10" width="4.400" height="20" rx="1" transform="rotate(135)"/><circle r="7.200"/></g><circle cx="10.500" cy="20" r="3.600" fill="#444"/></g><g transform="translate(958.6 40)"><path d="M9 3.500h15v26l-7.500-8-7.500 8z" fill="#333"/><path d="M8.500 2.500h15v25l-7.500-7.500-7.500 7.500z" fill="#c8c8c8"/></g><g transform="translate(997 40)"><path d="M2 29l8-7h6l-1 2.500h4.500l1-2.500h6.500l-7 7z" fill="#c8c8c8" stroke="#3a3a3a" stroke-width=".8"/><path d="M4.500 27.500l3-2.600M9 27.500h3" stroke="#444" stroke-width="1.400"/><path d="M19.500 2.500v20l-9.500 5.500v-14.500z" fill="#43afc3" stroke="#3a3a3a" stroke-width=".8"/></g><g transform="translate(1035 40)"><path d="M12.500 1l5 5.500h-3.400v5h-3.200v-5h-3.400zM1.500 12.500l5.500-5v3.400h5v3.200h-5v3.400z" fill="#c8c8c8"/><circle cx="20.500" cy="17.500" r="6.300" fill="none" stroke="#444" stroke-width="5"/><path d="M16 22.500l-7 6.500" stroke="#444" stroke-width="6" stroke-linecap="round"/><circle cx="20.500" cy="17.500" r="6.300" fill="none" stroke="#43afc3" stroke-width="2.800"/><path d="M16 22.500l-6.500 6" stroke="#43afc3" stroke-width="3.800" stroke-linecap="round"/></g><g transform="translate(1073 40)"><path d="M24.500 6.500L9 23" stroke="#43afc3" stroke-width="8.500" stroke-linecap="round"/><path d="M6.800 19.800l5.800 5.800-8.800 3.200z" fill="#8fd1de"/></g><g transform="translate(1133 40)"><path d="M5.500 5.500h21.500v21.500h-21.500zM12.700 5.500v21.500M19.900 5.500v21.500M5.500 12.700h21.500M5.500 19.900h21.500" fill="none" stroke="#c8c8c8" stroke-width="2.200"/></g><g transform="translate(1171 40)"><rect x="3" y="6" width="26.500" height="20.500" fill="none" stroke="#c8c8c8" stroke-width="2.200"/><path d="M4 9.500h25M4 23h25" stroke="#c8c8c8" stroke-width="2.600" stroke-dasharray="2.600 2"/></g><g transform="translate(1209 40)"><rect x="3" y="6" width="26.500" height="20.500" fill="none" stroke="#c8c8c8" stroke-width="2.200"/><circle cx="16.200" cy="16.200" r="5.800" fill="#43afc3"/></g><g transform="translate(1247 40)"><rect x="3" y="5" width="26" height="22" fill="#4e4e4e"/><circle cx="16" cy="16" r="7" fill="#3a3a3a"/></g><g transform="translate(1284.7 40)"><rect x="3" y="6" width="26.500" height="20.500" fill="none" stroke="#c8c8c8" stroke-width="2.200"/><path d="M13 9.500h6.500M13 23h6.500" stroke="#43afc3" stroke-width="2.600"/><path d="M6 16.200h4M22.500 16.200h4" stroke="#43afc3" stroke-width="6" stroke-dasharray="1.600 1.200"/><path d="M12.500 12.500h7.500v7.500h-7.500z" fill="none" stroke="#43afc3" stroke-width="1.400" stroke-dasharray="2 5.500"/></g><g transform="translate(1323 40)"><rect x="3" y="6" width="26.500" height="20.500" fill="none" stroke="#c8c8c8" stroke-width="2.200"/><circle cx="21.500" cy="12.500" r="3.600" fill="#43afc3"/><path d="M7 23l6.500-9 6.500 9z" fill="#43afc3"/></g><g transform="translate(1361 40)"><rect x="3" y="6" width="26.500" height="20.500" fill="none" stroke="#c8c8c8" stroke-width="2.200"/><text x="16.200" y="23.500" font-family="Liberation Serif,DejaVu Serif,serif" font-size="19" text-anchor="middle" fill="#43afc3">T</text></g><g transform="translate(1421 40)"><path d="M16 2.500l13 6v15l-13 6-13-6v-15z" fill="none" stroke="#c8c8c8" stroke-width="2.200" stroke-linejoin="round"/><path d="M3 8.500l13 6 13-6M16 14.500v15" fill="none" stroke="#c8c8c8" stroke-width="2.200"/><path d="M16 3v7M7 20l5-2.500M25 20l-5-2.500" stroke="#777" stroke-width="1.400"/></g><g transform="translate(1459 40)"><path d="M16 2.500l13 6-13 6-13-6z" fill="#8fdfe9"/><path d="M3 8.500l13 6v15l-13-6z" fill="#45aec0"/><path d="M29 8.500l-13 6v15l13-6z" fill="#5fcbd9"/><path d="M16 2.500l13 6v15l-13 6-13-6v-15zM3 8.500l13 6 13-6M16 14.500v15" fill="none" stroke="#2d4a58" stroke-width="1.400" stroke-linejoin="round"/></g><g transform="translate(1497 40)"><circle cx="16" cy="16" r="12.500" fill="url(#chk)"/><path d="M16 3.500a12.500 12.500 0 0 0 0 25z" fill="#c8c8c8"/></g><g transform="translate(1535 40)"><path d="M16 8.500l6.500 3-6.500 3-6.500-3z" fill="#7fd8e4"/><path d="M8.500 13l6.800 3.200v8l-6.800-3.200z" fill="#43afc3"/><path d="M23.500 13l-6.800 3.200v8l6.800-3.200z" fill="#5fcbd9"/><path d="M16 2.500l13 6v15l-13 6-13-6v-15z" fill="none" stroke="#c8c8c8" stroke-width="2.200" stroke-linejoin="round"/><path d="M3 8.500l13 6 13-6M16 14.500v15" fill="none" stroke="#c8c8c8" stroke-width="2.200" stroke-dasharray="5 11 30 11 5 0 4 7 4"/></g><g transform="translate(1573 40)"><circle cx="16" cy="16" r="12.800" fill="url(#chk)"/><circle cx="16" cy="16" r="12.800" fill="none" stroke="#3a3a3a" stroke-width="1"/></g><g transform="translate(1611 40)"><path d="M16 5.500a7.500 7.500 0 0 1 4.300 13.600c-.9.800-1.300 1.900-1.300 3.400h-6c0-1.500-.4-2.600-1.300-3.400a7.500 7.500 0 0 1 4.300-13.600z" fill="#c8c8c8"/><rect x="13.200" y="24" width="5.600" height="2.200" fill="#c8c8c8"/><path d="M14 27.500h4l-2 2.500z" fill="#c8c8c8"/><path d="M16 .500v2.500M5.500 5l2 2M26.500 5l-2 2M2.500 14h2.500M29.500 14h-2.500" stroke="#c8c8c8" stroke-width="1.800"/></g><g transform="translate(1649 40)"><ellipse cx="9" cy="24.500" rx="8" ry="3.500" transform="rotate(12 9 24.500)" fill="url(#hat2)"/><circle cx="20" cy="14.500" r="9.800" fill="#43afc3" stroke="#3a3a3a" stroke-width=".8"/></g><g transform="translate(1709 40)"><path d="M3 22h26l-5 8h-16z" fill="url(#hat)"/><circle cx="16" cy="13" r="10" fill="#c8c8c8"/><path d="M7.300 18a10 10 0 0 0 17.400 0z" fill="url(#hat2)"/></g><g transform="translate(1747 40)"><circle cx="10" cy="23.500" r="6.500" fill="#5c5c5c"/><circle cx="14" cy="19" r="7.200" fill="#858585"/><circle cx="20.500" cy="11.500" r="8.500" fill="#c8c8c8" stroke="#3a3a3a" stroke-width=".8"/></g><g transform="translate(1785 40)"><path d="M16.500 4.500a11.500 11.500 0 1 0 0 23" fill="none" stroke="#43afc3" stroke-width="4.600"/><g fill="#c8c8c8"><rect x="17" y="2.300" width="4.400" height="4.400"/><rect x="21.400" y="6.700" width="4.400" height="4.400"/><rect x="25.800" y="11.100" width="4.400" height="4.400"/><rect x="25.800" y="16.500" width="4.400" height="4.400"/><rect x="21.400" y="20.900" width="4.400" height="4.400"/><rect x="17" y="25.300" width="4.400" height="4.400"/></g></g><g transform="translate(1823 40)"><rect x="4" y="4" width="13" height="13" fill="#3b4b4f"/><path d="M4 9l5-5M4 14l10-10M7 17l10-10M12 17l5-5" stroke="#33565c" stroke-width="1.200"/><rect x="12.500" y="12.500" width="16" height="16" fill="#3f5659"/></g><g transform="translate(1884 40)"><rect x="2.500" y="4" width="16" height="16" fill="none" stroke="#43afc3" stroke-width="2.400" stroke-dasharray="5 2.600"/><path d="M17 11.500v18.500l4.300-4 2.700 6 3.500-1.600-2.700-5.900 5.700-.8z" fill="#c8c8c8" stroke="#444" stroke-width="1.200" stroke-linejoin="round"/></g><g transform="translate(1943 40)"><rect x="10.500" y="5.500" width="16" height="16" fill="none" stroke="#c8c8c8" stroke-width="3"/><rect x="4" y="11.500" width="16.500" height="16.500" fill="#c8c8c8" stroke="#3d3d3d" stroke-width="1.500"/></g><g transform="translate(1981 40)"><path d="M4 12v16h16" fill="none" stroke="#c8c8c8" stroke-width="4"/><rect x="10" y="4.500" width="17.500" height="17.500" fill="none" stroke="#c8c8c8" stroke-width="2.600"/><rect x="15.500" y="10" width="6.500" height="6.500" fill="#c8c8c8"/></g><g transform="translate(2019 40)"><rect x="4" y="4.500" width="23.500" height="23.500" fill="none" stroke="#c8c8c8" stroke-width="2.600"/><circle cx="12.500" cy="12.500" r="4" fill="#c8c8c8"/><path d="M10 15.500l5.500-5.500 9 14z" fill="#c8c8c8"/></g><g transform="translate(2081 40)"><circle cx="16" cy="16" r="12.500" fill="#c8c8c8"/><g transform="translate(16 16)"><path d="M0 -5.200L11.500 -5.200" transform="rotate(0)" stroke="#444" stroke-width="1.800"/><path d="M0 -5.200L11.500 -5.200" transform="rotate(60)" stroke="#444" stroke-width="1.800"/><path d="M0 -5.200L11.500 -5.200" transform="rotate(120)" stroke="#444" stroke-width="1.800"/><path d="M0 -5.200L11.500 -5.200" transform="rotate(180)" stroke="#444" stroke-width="1.800"/><path d="M0 -5.200L11.500 -5.200" transform="rotate(240)" stroke="#444" stroke-width="1.800"/><path d="M0 -5.200L11.500 -5.200" transform="rotate(300)" stroke="#444" stroke-width="1.800"/></g><circle cx="16" cy="16" r="3.400" fill="#444"/></g><g transform="translate(2203 40)"><rect x="15" y="4.500" width="12" height="23" fill="#c8c8c8"/><path d="M16 4.500a11.500 11.500 0 0 0 0 23z" fill="#c8c8c8"/><path d="M16 5.500a10.500 10.500 0 0 1 0 21z" fill="#444"/></g></svg>
<div class="fld" style="left:2120px;top:41px;width:74px;height:26px;border-radius:3px;box-shadow:0 0 0 1px #3a3a3a"></div><div class="t" style="left:2130px;top:40px;color:#d8d8d8">0.00</div>
<!-- ===== Viewport scene ===== -->
<svg style="left:611px;top:78px" width="1635" height="1000" viewBox="611 78 1635 1000"><defs>
<linearGradient id="gA" x1="0" y1="0" x2="1" y2="0.3"><stop offset="0" stop-color="#2e2e2e"/><stop offset="0.25" stop-color="#4c4c4c"/><stop offset="0.6" stop-color="#444"/><stop offset="1" stop-color="#2a2a2a"/></linearGradient>
<linearGradient id="gB" x1="0" y1="0" x2="1" y2="0"><stop offset="0" stop-color="#303030"/><stop offset="0.35" stop-color="#4a4a4a"/><stop offset="0.7" stop-color="#404040"/><stop offset="1" stop-color="#282828"/></linearGradient>
<linearGradient id="gC" x1="0" y1="0" x2="0.6" y2="1"><stop offset="0" stop-color="#4e4e4e"/><stop offset="0.6" stop-color="#3a3a3a"/><stop offset="1" stop-color="#242424"/></linearGradient>
<linearGradient id="gD" x1="0" y1="0" x2="1" y2="0"><stop offset="0" stop-color="#383838"/><stop offset="0.4" stop-color="#555"/><stop offset="0.75" stop-color="#404040"/><stop offset="1" stop-color="#222"/></linearGradient>
<radialGradient id="gE" cx="0.35" cy="0.3" r="0.8"><stop offset="0" stop-color="#484848"/><stop offset="0.6" stop-color="#303030"/><stop offset="1" stop-color="#1c1c1c"/></radialGradient>
<linearGradient id="gF" x1="0" y1="0" x2="1" y2="0"><stop offset="0" stop-color="#2a2a2a"/><stop offset="0.5" stop-color="#3c3c3c"/><stop offset="1" stop-color="#222"/></linearGradient>
<linearGradient id="cf" x1="0" y1="0" x2="0" y2="1"><stop offset="0" stop-color="#b2b2b2"/><stop offset="1" stop-color="#989898"/></linearGradient>
<linearGradient id="cl" x1="0" y1="0" x2="0" y2="1"><stop offset="0" stop-color="#aaa"/><stop offset="1" stop-color="#8c8c8c"/></linearGradient>
<linearGradient id="gP1" x1="0.2" y1="0" x2="0.6" y2="1"><stop offset="0" stop-color="#585858"/><stop offset="0.55" stop-color="#505050"/><stop offset="1" stop-color="#363636"/></linearGradient>
<linearGradient id="gP2" x1="0" y1="0" x2="1" y2="0.4"><stop offset="0" stop-color="#383838"/><stop offset="0.45" stop-color="#4a4a4a"/><stop offset="0.8" stop-color="#444"/><stop offset="1" stop-color="#2e2e2e"/></linearGradient>
<linearGradient id="gP3" x1="0" y1="0" x2="1" y2="0.5"><stop offset="0" stop-color="#4e4e4e"/><stop offset="0.6" stop-color="#454545"/><stop offset="1" stop-color="#2c2c2c"/></linearGradient>
<radialGradient id="gH" cx="0.5" cy="0.28" r="0.62"><stop offset="0" stop-color="#5a5a5a"/><stop offset="0.55" stop-color="#484848"/><stop offset="1" stop-color="#2a2a2a"/></radialGradient>
<linearGradient id="gFace" x1="0" y1="0" x2="1" y2="0.6"><stop offset="0" stop-color="#383838"/><stop offset="0.55" stop-color="#4c4c4c"/><stop offset="1" stop-color="#333"/></linearGradient>
<linearGradient id="gArm" x1="0" y1="0" x2="1" y2="0"><stop offset="0" stop-color="#3a3a3a"/><stop offset="0.3" stop-color="#4e4e4e"/><stop offset="0.65" stop-color="#404040"/><stop offset="1" stop-color="#1e1e1e"/></linearGradient>
<linearGradient id="gBic" x1="0.3" y1="0" x2="0.7" y2="1"><stop offset="0" stop-color="#383838"/><stop offset="0.4" stop-color="#484848"/><stop offset="1" stop-color="#1e1e1e"/></linearGradient>
<linearGradient id="gPad" x1="0.3" y1="0" x2="0.6" y2="1"><stop offset="0" stop-color="#525252"/><stop offset="0.4" stop-color="#484848"/><stop offset="0.75" stop-color="#2e2e2e"/><stop offset="1" stop-color="#1e1e1e"/></linearGradient>
<linearGradient id="gAb" x1="0" y1="0" x2="1" y2="0"><stop offset="0" stop-color="#222"/><stop offset="0.3" stop-color="#383838"/><stop offset="0.7" stop-color="#343434"/><stop offset="1" stop-color="#202020"/></linearGradient>
</defs><g><ellipse cx="1399.4" cy="484.0" rx="62" ry="19.500" fill="none" stroke="#f0e050" stroke-width="1.200"/></g><g style="filter:brightness(1.13)"><path d="M1343.8 631.4C1344.7 628.1 1348.1 624.9 1351.4 623.8C1354.8 622.8 1359.8 622.2 1364.0 625.1C1368.2 628.1 1372.7 634.6 1376.7 641.5C1380.7 648.5 1387.2 658.8 1388.0 666.8C1388.9 674.7 1384.0 682.5 1381.7 689.5C1379.4 696.4 1377.5 706.7 1374.1 708.4C1370.8 710.1 1364.7 703.1 1361.5 699.6C1358.4 696.0 1356.9 693.2 1355.2 686.9C1353.5 680.6 1352.9 668.9 1351.4 661.7C1349.9 654.6 1347.6 649.1 1346.4 644.0C1345.1 639.0 1343.0 634.8 1343.8 631.4Z" fill="url(#gF)" /><path d="M1357.7 469.9C1372.9 464.9 1432.6 464.0 1447.3 469.9C1462.0 475.8 1446.7 496.4 1446.1 505.2C1445.4 514.1 1443.1 514.5 1443.5 522.9C1444.0 531.3 1447.7 545.2 1448.6 555.7C1449.4 566.2 1449.0 575.9 1448.6 586.0C1448.2 596.1 1447.7 606.6 1446.1 616.3C1444.4 626.0 1441.6 637.7 1438.5 644.0C1435.3 650.3 1430.7 652.0 1427.1 654.1C1423.6 656.2 1420.4 662.1 1417.0 656.7C1413.7 651.2 1413.7 636.9 1406.9 621.3C1400.2 605.8 1385.9 573.0 1376.7 563.3C1367.4 553.6 1357.5 566.2 1351.4 563.3C1345.3 560.3 1342.0 551.1 1340.1 545.6C1338.2 540.1 1338.6 535.9 1340.1 530.5C1341.5 525.0 1346.2 517.9 1348.9 512.8C1351.6 507.8 1355.0 507.3 1356.5 500.2C1357.9 493.0 1342.6 475.0 1357.7 469.9Z" fill="url(#gB)" /><path d="M1422.1 550.7C1426.5 541.4 1441.6 529.6 1446.1 530.5C1450.5 531.3 1448.2 546.5 1448.6 555.7C1449.0 565.0 1449.0 575.9 1448.6 586.0C1448.2 596.1 1447.7 606.6 1446.1 616.3C1444.4 626.0 1441.6 637.7 1438.5 644.0C1435.3 650.3 1430.2 652.9 1427.1 654.1C1424.1 655.4 1420.7 657.1 1420.1 651.6C1419.4 646.1 1423.4 632.3 1423.3 621.3C1423.3 610.4 1419.8 597.8 1419.6 586.0C1419.3 574.2 1417.7 559.9 1422.1 550.7Z" fill="url(#gF)" /><path d="M1394.3 540.6C1397.1 538.3 1412.0 546.5 1417.0 549.4C1422.1 552.3 1424.2 554.7 1424.6 558.2C1425.0 561.8 1422.4 565.8 1419.6 570.9C1416.7 575.9 1410.6 589.8 1407.4 588.5C1404.3 587.3 1402.8 571.3 1400.6 563.3C1398.4 555.3 1391.6 542.9 1394.3 540.6Z" fill="#272727" /><path d="M1367.8 527.9C1371.6 525.8 1377.7 528.8 1381.7 530.5C1385.7 532.2 1388.9 532.6 1391.8 538.0C1394.7 543.5 1396.8 554.4 1399.4 563.3C1401.9 572.1 1404.4 581.4 1406.9 591.0C1409.5 600.7 1412.0 612.5 1414.5 621.3C1417.0 630.2 1420.8 637.7 1422.1 644.0C1423.3 650.3 1423.8 656.2 1422.1 659.2C1420.4 662.1 1415.8 659.2 1412.0 661.7C1408.2 664.2 1403.4 673.5 1399.4 674.3C1395.4 675.2 1391.8 671.4 1388.0 666.8C1384.2 662.1 1380.7 653.3 1376.7 646.6C1372.7 639.8 1367.6 633.1 1364.0 626.4C1360.5 619.6 1357.3 612.9 1355.2 606.2C1353.1 599.5 1351.6 593.1 1351.4 586.0C1351.2 578.8 1352.7 570.4 1353.9 563.3C1355.2 556.1 1356.7 549.0 1359.0 543.1C1361.3 537.2 1364.0 530.1 1367.8 527.9Z" fill="url(#gD)" /><path d="M1376.7 538.0C1378.3 542.3 1383.4 553.6 1386.8 563.3C1390.1 573.0 1393.5 584.7 1396.8 596.1C1400.2 607.4 1404.2 621.7 1406.9 631.4C1409.7 641.1 1412.2 650.3 1413.2 654.1" fill="none" stroke="#5e5e5e" stroke-width="5" stroke-linecap="round" opacity="0.5"/><path d="M1365.3 538.0C1364.0 542.3 1359.2 554.9 1357.7 563.3C1356.3 571.7 1355.4 579.7 1356.5 588.5C1357.5 597.4 1360.7 607.4 1364.0 616.3C1367.4 625.1 1374.6 637.3 1376.7 641.5" fill="none" stroke="#2e2e2e" stroke-width="4" stroke-linecap="round" opacity="0.7"/><path d="M1394.9 675.2C1391.6 677.0 1390.0 680.8 1387.1 684.4C1384.2 688.1 1380.1 692.0 1377.5 696.9C1375.0 701.9 1372.7 709.1 1371.8 714.3C1370.9 719.5 1371.4 723.8 1372.0 728.2C1372.6 732.5 1373.1 735.4 1375.3 740.3C1377.5 745.2 1381.9 752.2 1385.4 757.7C1388.8 763.2 1393.5 767.8 1395.8 773.3C1398.1 778.8 1398.5 785.4 1399.2 790.7C1400.0 795.9 1400.5 800.2 1400.1 804.5C1399.7 808.9 1397.8 812.9 1396.6 816.7C1395.5 820.4 1393.3 823.6 1393.2 827.1C1393.0 830.6 1394.2 833.5 1395.8 837.5C1397.4 841.6 1400.4 847.0 1402.7 851.4C1405.0 855.7 1407.3 860.4 1409.7 863.5C1412.0 866.7 1413.7 868.3 1416.6 870.5C1419.5 872.6 1423.0 875.4 1427.0 876.6C1431.1 877.7 1436.8 877.9 1440.9 877.4C1444.9 877.0 1448.8 876.3 1451.3 873.9C1453.8 871.6 1454.9 867.3 1455.6 863.5C1456.4 859.8 1456.9 855.4 1455.6 851.4C1454.3 847.3 1450.6 843.0 1447.8 839.2C1445.1 835.5 1441.8 832.9 1439.2 828.8C1436.6 824.8 1434.5 820.2 1432.2 814.9C1429.9 809.7 1427.3 803.4 1425.3 797.6C1423.2 791.8 1421.5 786.6 1420.1 780.2C1418.6 773.9 1416.7 765.8 1416.6 759.4C1416.4 753.1 1418.2 747.8 1419.2 742.1C1420.2 736.3 1422.2 730.5 1422.7 724.7C1423.1 718.9 1422.3 712.6 1421.8 707.4C1421.3 702.1 1420.5 697.3 1419.7 693.5C1418.9 689.7 1419.1 687.7 1416.9 684.4C1414.8 681.2 1410.7 675.6 1407.0 674.0C1403.4 672.5 1398.2 673.5 1394.9 675.2Z" fill="url(#gD)" /><path d="M1420.9 700.4C1420.6 704.5 1420.2 716.9 1419.2 724.7C1418.2 732.5 1415.4 740.0 1414.9 747.3C1414.3 754.5 1414.6 760.3 1415.7 768.1C1416.9 775.9 1419.3 786.0 1421.8 794.1C1424.3 802.2 1427.3 810.0 1430.5 816.7C1433.7 823.3 1439.2 831.1 1440.9 834.0" fill="none" stroke="#262626" stroke-width="5" stroke-linecap="round" opacity="0.7"/><path d="M1394.0 821.9C1393.2 824.8 1395.5 833.5 1397.5 839.2C1399.5 845.0 1403.0 851.4 1406.2 856.6C1409.4 861.8 1413.7 867.6 1416.6 870.5C1419.5 873.4 1423.8 876.3 1423.5 873.9C1423.2 871.6 1417.6 862.4 1414.9 856.6C1412.1 850.8 1409.1 845.0 1407.0 839.2C1405.0 833.5 1404.9 824.8 1402.7 821.9C1400.5 819.0 1394.9 819.0 1394.0 821.9Z" fill="#242424" /><path d="M1399.4 661.7C1400.8 657.7 1405.7 655.4 1409.5 655.4C1413.2 655.4 1419.6 658.5 1422.1 661.7C1424.5 664.9 1424.9 670.5 1424.1 674.3C1423.3 678.1 1420.1 682.1 1417.0 684.4C1414.0 686.7 1408.4 689.0 1405.7 688.2C1402.9 687.4 1401.7 683.8 1400.6 679.4C1399.6 675.0 1397.9 665.7 1399.4 661.7Z" fill="url(#gE)" /><path d="M1348.9 308.6C1342.2 306.5 1341.3 314.9 1336.3 318.7C1331.2 322.5 1323.4 326.7 1318.6 331.3C1313.8 336.0 1308.5 340.6 1307.3 346.5C1306.0 352.4 1307.9 357.0 1311.0 366.7C1314.2 376.3 1324.9 396.1 1326.2 404.5C1327.4 412.9 1320.7 412.9 1318.6 417.1C1316.5 421.3 1312.3 425.5 1313.6 429.7C1314.8 434.0 1321.6 437.7 1326.2 442.4C1330.8 447.0 1336.3 453.3 1341.3 457.5C1346.4 461.7 1353.1 464.2 1356.5 467.6C1359.8 471.0 1361.1 473.5 1361.5 477.7C1361.9 481.9 1359.8 486.1 1359.0 492.8C1358.1 499.6 1341.5 513.9 1356.5 518.1C1371.4 522.3 1433.6 523.1 1448.6 518.1C1463.5 513.0 1446.1 496.2 1446.1 487.8C1446.1 479.4 1447.3 473.5 1448.6 467.6C1449.8 461.7 1453.0 458.8 1453.6 452.5C1454.3 446.2 1452.2 437.7 1452.4 429.7C1452.6 421.8 1453.6 411.2 1454.9 404.5C1456.2 397.8 1459.9 395.7 1459.9 389.4C1459.9 383.1 1457.8 373.8 1454.9 366.7C1451.9 359.5 1446.9 352.4 1442.3 346.5C1437.6 340.6 1432.3 335.5 1427.1 331.3C1422.0 327.1 1419.9 321.2 1411.5 321.2C1403.1 321.2 1387.1 333.4 1376.7 331.3C1366.2 329.2 1355.6 310.7 1348.9 308.6Z" fill="#3c3c3c" /><path d="M1357.4 472.3C1360.0 466.9 1368.1 476.8 1373.9 477.5C1379.6 478.3 1385.8 479.2 1391.8 476.8C1397.8 474.4 1403.6 467.8 1409.8 463.3C1416.1 458.8 1422.2 451.3 1429.3 449.8C1436.4 448.3 1449.2 444.3 1452.5 454.3C1455.8 464.3 1464.8 500.5 1449.1 509.7C1433.3 519.0 1373.4 516.0 1358.1 509.7C1342.8 503.5 1354.8 477.7 1357.4 472.3Z" fill="url(#gAb)" /><path d="M1358.1 473.8C1360.7 474.7 1368.2 478.2 1373.9 479.0C1379.5 479.8 1385.8 480.9 1391.8 478.6C1397.8 476.2 1403.6 469.3 1409.8 464.8C1416.1 460.3 1422.2 453.1 1429.3 451.6C1436.4 450.2 1448.4 455.4 1452.2 456.1" fill="none" stroke="#1e1e1e" stroke-width="2.8" stroke-linecap="round" opacity="1"/><path d="M1325.9 416.9C1323.4 420.1 1332.9 427.8 1337.9 434.8C1342.9 441.8 1349.9 452.3 1355.9 458.8C1361.9 465.3 1367.9 471.0 1373.9 473.8C1379.9 476.5 1385.8 477.3 1391.8 475.3C1397.8 473.3 1403.6 466.3 1409.8 461.8C1416.1 457.3 1422.3 449.8 1429.3 448.3C1436.3 446.8 1447.5 457.6 1451.8 452.8C1456.0 448.1 1455.5 426.8 1454.8 419.9C1454.0 412.9 1453.8 411.1 1447.3 410.9C1440.8 410.6 1425.8 415.4 1415.8 418.4C1405.8 421.3 1397.8 429.3 1387.3 428.8C1376.9 428.3 1363.1 417.4 1352.9 415.4C1342.6 413.4 1328.4 413.6 1325.9 416.9Z" fill="url(#gP2)" /><path d="M1427.8 413.9L1429.3 448.3" fill="none" stroke="#2e2e2e" stroke-width="2" stroke-linecap="round" opacity="1"/><path d="M1331.9 416.9C1333.9 419.9 1339.4 428.6 1343.9 434.8C1348.4 441.1 1356.4 451.1 1358.9 454.3" fill="none" stroke="#2a2a2a" stroke-width="3" stroke-linecap="round" opacity="1"/><path d="M1304.9 349.4C1305.9 349.2 1312.4 341.7 1316.9 337.5C1321.4 333.2 1327.4 326.7 1331.9 324.0C1336.4 321.2 1339.9 320.0 1343.9 321.0C1347.9 322.0 1351.4 325.2 1355.9 330.0C1360.4 334.7 1362.1 344.7 1370.9 349.4C1379.6 354.2 1399.3 358.4 1408.3 358.4C1417.3 358.4 1420.0 351.7 1424.8 349.4C1429.5 347.2 1435.8 347.4 1436.8 344.9C1437.8 342.4 1433.8 338.2 1430.8 334.5C1427.8 330.7 1422.3 323.2 1418.8 322.5C1415.3 321.7 1413.8 327.5 1409.8 330.0C1405.8 332.5 1400.8 336.7 1394.8 337.5C1388.8 338.2 1380.3 337.0 1373.9 334.5C1367.4 332.0 1359.9 326.7 1355.9 322.5C1351.9 318.2 1351.9 310.2 1349.9 309.0C1347.9 307.7 1347.1 312.7 1343.9 315.0C1340.6 317.2 1335.9 318.5 1330.4 322.5C1324.9 326.5 1315.2 334.5 1310.9 339.0C1306.7 343.4 1303.9 349.7 1304.9 349.4Z" fill="#444" /><path d="M1304.9 349.4C1305.9 346.7 1312.4 341.7 1316.9 337.5C1321.4 333.2 1327.4 326.7 1331.9 324.0C1336.4 321.2 1339.9 320.0 1343.9 321.0C1347.9 322.0 1351.4 325.2 1355.9 330.0C1360.4 334.7 1367.9 344.4 1370.9 349.4C1373.9 354.4 1379.4 357.7 1373.9 359.9C1368.4 362.2 1348.4 363.9 1337.9 362.9C1327.4 361.9 1316.4 356.2 1310.9 353.9C1305.4 351.7 1303.9 352.2 1304.9 349.4Z" fill="#4a4a4a" /><path d="M1408.3 358.4C1410.3 354.7 1420.0 351.7 1424.8 349.4C1429.5 347.2 1432.8 343.7 1436.8 344.9C1440.8 346.2 1445.5 351.4 1448.8 356.9C1452.0 362.4 1454.8 370.9 1456.3 377.9C1457.8 384.9 1459.3 393.4 1457.8 398.9C1456.3 404.4 1450.8 408.1 1447.3 410.9C1443.8 413.6 1440.0 415.4 1436.8 415.4C1433.5 415.4 1430.5 414.6 1427.8 410.9C1425.0 407.1 1422.8 399.4 1420.3 392.9C1417.8 386.4 1414.8 377.7 1412.8 371.9C1410.8 366.2 1406.3 362.2 1408.3 358.4Z" fill="url(#gP3)" /><path d="M1330.4 395.9C1330.9 391.4 1334.7 382.4 1337.9 377.9C1341.1 373.4 1343.9 371.7 1349.9 368.9C1355.9 366.2 1366.4 362.9 1373.9 361.4C1381.3 359.9 1389.8 358.9 1394.8 359.9C1399.8 360.9 1400.8 363.4 1403.8 367.4C1406.8 371.4 1410.3 377.7 1412.8 383.9C1415.3 390.1 1418.3 399.4 1418.8 404.9C1419.3 410.4 1418.3 413.6 1415.8 416.9C1413.3 420.1 1408.6 422.6 1403.8 424.3C1399.1 426.1 1392.8 427.3 1387.3 427.3C1381.8 427.3 1376.6 426.6 1370.9 424.3C1365.1 422.1 1358.9 417.1 1352.9 413.9C1346.9 410.6 1338.7 407.9 1334.9 404.9C1331.2 401.9 1329.9 400.4 1330.4 395.9Z" fill="url(#gP1)" /><path d="M1330.4 397.4C1334.2 400.4 1346.1 410.6 1352.9 415.4C1359.6 420.1 1365.1 423.6 1370.9 425.8C1376.6 428.1 1381.8 428.8 1387.3 428.8C1392.8 428.8 1399.0 427.6 1403.8 425.8C1408.7 424.1 1414.4 419.6 1416.6 418.4" fill="none" stroke="#262626" stroke-width="3" stroke-linecap="round" opacity="1"/><path d="M1310.9 354.7C1315.4 356.1 1327.4 362.0 1337.9 362.9C1348.4 363.8 1364.4 360.5 1373.9 359.9C1383.3 359.3 1391.3 359.3 1394.8 359.2" fill="none" stroke="#343434" stroke-width="2.5" stroke-linecap="round" opacity="1"/><path d="M1394.8 359.9C1396.3 361.2 1400.8 363.4 1403.8 367.4C1406.8 371.4 1410.2 377.7 1412.8 383.9C1415.4 390.1 1417.1 400.2 1419.6 404.9C1422.0 409.5 1426.4 410.5 1427.8 411.6" fill="none" stroke="#303030" stroke-width="2.5" stroke-linecap="round" opacity="1"/><path d="M1406.8 356.9C1406.3 353.7 1404.8 343.2 1403.8 337.5C1402.8 331.7 1401.3 325.0 1400.8 322.5" fill="none" stroke="#3a3a3a" stroke-width="3" stroke-linecap="round" opacity="1"/><path d="M1349.3 283.7C1349.3 286.4 1352.4 295.5 1355.5 301.5C1358.6 307.4 1364.1 314.5 1367.9 319.2C1371.8 323.9 1374.1 326.9 1378.6 329.8C1383.0 332.8 1389.5 336.4 1394.5 336.9C1399.5 337.5 1405.6 335.2 1408.7 333.4C1411.8 331.6 1412.3 329.3 1413.2 326.3C1414.0 323.3 1414.8 317.1 1414.0 315.7C1413.3 314.2 1411.4 316.5 1408.7 317.4C1406.1 318.3 1401.3 321.0 1398.1 321.0C1394.8 321.0 1392.7 319.5 1389.2 317.4C1385.6 315.4 1380.6 311.8 1376.8 308.6C1372.9 305.3 1369.7 301.8 1366.1 297.9C1362.6 294.1 1358.3 287.9 1355.5 285.5C1352.7 283.1 1349.3 281.1 1349.3 283.7Z" fill="#3a3a3a" /><path d="M1391.0 319.2C1391.3 318.4 1395.1 321.6 1398.1 321.3C1401.0 321.1 1406.2 318.4 1408.7 317.8C1411.2 317.1 1412.4 316.0 1413.2 317.4C1413.9 318.8 1413.9 323.6 1413.2 326.3C1412.4 329.0 1411.2 331.9 1408.7 333.4C1406.2 334.9 1400.1 336.4 1398.1 335.2C1396.0 334.0 1397.5 329.0 1396.3 326.3C1395.1 323.6 1390.7 320.0 1391.0 319.2Z" fill="#2a2a2a" /><path d="M1340.4 248.2C1340.4 244.1 1340.6 238.5 1342.2 234.0C1343.8 229.6 1346.8 225.2 1350.2 221.6C1353.6 218.1 1357.9 214.7 1362.6 212.7C1367.3 210.8 1373.2 209.8 1378.6 210.1C1383.9 210.4 1389.8 212.0 1394.5 214.5C1399.3 217.0 1403.4 221.0 1406.9 225.2C1410.5 229.3 1413.8 235.2 1415.8 239.4C1417.8 243.5 1418.6 245.0 1419.0 250.0C1419.4 255.0 1418.4 262.1 1418.5 269.5C1418.6 276.9 1420.0 287.6 1419.7 294.4C1419.4 301.2 1418.5 306.5 1416.7 310.3C1414.9 314.2 1411.8 315.7 1408.7 317.4C1405.6 319.2 1401.3 321.0 1398.1 321.0C1394.8 321.0 1392.7 319.5 1389.2 317.4C1385.6 315.4 1380.6 311.8 1376.8 308.6C1372.9 305.3 1369.7 301.8 1366.1 297.9C1362.6 294.1 1358.7 290.2 1355.5 285.5C1352.2 280.8 1348.8 274.0 1346.6 269.5C1344.4 265.1 1343.2 262.4 1342.2 258.9C1341.1 255.3 1340.4 252.4 1340.4 248.2Z" fill="url(#gH)" /><path d="M1342.2 253.6C1342.6 253.3 1345.7 262.7 1348.4 266.0C1351.1 269.2 1355.2 267.7 1358.1 273.1C1361.1 278.4 1363.0 292.0 1366.1 297.9C1369.2 303.8 1372.9 305.3 1376.8 308.6C1380.6 311.8 1388.9 316.8 1389.2 317.4C1389.5 318.0 1382.7 315.1 1378.6 312.1C1374.4 309.1 1368.5 304.4 1364.4 299.7C1360.2 295.0 1356.8 289.0 1353.7 283.7C1350.6 278.4 1347.6 272.8 1345.7 267.7C1343.8 262.7 1341.7 253.8 1342.2 253.6Z" fill="#2c2c2c" /><path d="M1366.1 274.8C1367.6 271.9 1373.8 274.3 1378.6 273.1C1383.3 271.9 1389.5 269.2 1394.5 267.7C1399.5 266.3 1404.8 265.7 1408.7 264.2C1412.6 262.7 1416.3 253.8 1418.1 258.9C1420.0 263.9 1420.0 285.8 1419.7 294.4C1419.5 302.9 1418.5 306.5 1416.7 310.3C1414.9 314.2 1411.8 315.7 1408.7 317.4C1405.6 319.2 1401.3 321.0 1398.1 321.0C1394.8 321.0 1392.7 320.1 1389.2 317.4C1385.6 314.8 1380.0 309.4 1376.8 305.0C1373.5 300.6 1371.5 295.8 1369.7 290.8C1367.9 285.8 1364.7 277.8 1366.1 274.8Z" fill="url(#gFace)" /><path d="M1389.2 316.5C1390.5 316.5 1394.8 320.1 1398.1 320.1C1401.3 320.1 1405.6 318.3 1408.7 316.5C1411.8 314.8 1415.5 309.9 1416.7 309.4C1417.9 308.9 1417.5 311.7 1416.2 313.5C1414.8 315.3 1411.7 318.4 1408.7 320.1C1405.7 321.8 1401.2 323.7 1398.1 323.8C1395.0 323.9 1391.6 321.8 1390.1 320.6C1388.6 319.4 1387.9 316.6 1389.2 316.5Z" fill="#1c1c1c" /><path d="M1358.1 266.9C1360.5 265.6 1367.8 266.0 1373.2 265.1C1378.7 264.2 1385.6 263.0 1391.0 261.5C1396.3 260.1 1400.6 257.8 1405.2 256.2C1409.8 254.6 1416.3 251.3 1418.5 251.8C1420.7 252.2 1419.9 256.8 1418.3 258.9C1416.7 260.9 1412.7 262.7 1408.7 264.2C1404.8 265.7 1399.5 266.6 1394.5 268.1C1389.5 269.6 1383.3 272.2 1378.6 273.4C1373.8 274.6 1369.4 275.3 1366.1 275.2C1362.9 275.1 1360.4 273.9 1359.0 272.5C1357.7 271.1 1355.8 268.1 1358.1 266.9Z" fill="#1c1c1c" /><path d="M1454.8 376.0C1456.0 372.9 1463.1 362.7 1467.3 361.8C1471.4 360.9 1474.7 368.3 1479.7 370.7C1484.7 373.0 1492.3 373.9 1497.4 376.0C1502.6 378.0 1507.8 379.2 1510.7 383.1C1513.7 386.9 1518.6 397.6 1515.2 399.0C1511.8 400.5 1497.4 394.2 1490.3 391.9C1483.2 389.7 1477.6 387.7 1472.6 385.7C1467.6 383.8 1463.1 382.0 1460.2 380.4C1457.2 378.8 1453.7 379.1 1454.8 376.0Z" fill="#2c2c2c" /><path d="M1436.2 319.2C1438.3 317.0 1447.0 315.7 1451.3 316.5C1455.6 317.4 1458.1 321.7 1461.9 324.5C1465.8 327.3 1470.5 331.3 1474.4 333.4C1478.2 335.5 1484.1 334.9 1485.0 336.9C1485.9 339.0 1482.1 342.9 1479.7 345.8C1477.3 348.8 1472.9 352.0 1470.8 354.7C1468.7 357.3 1469.0 358.8 1467.3 361.8C1465.5 364.7 1462.2 369.9 1460.2 372.4C1458.1 374.9 1456.6 378.0 1454.8 376.9C1453.1 375.7 1451.3 370.5 1449.5 365.3C1447.8 360.2 1446.0 351.7 1444.2 345.8C1442.4 339.9 1440.2 334.3 1438.9 329.8C1437.5 325.4 1434.1 321.4 1436.2 319.2Z" fill="url(#gP3)" /><path d="M1509.9 383.1C1510.7 378.6 1515.5 374.2 1518.7 370.7C1522.0 367.1 1526.1 365.6 1529.4 361.8C1532.6 357.9 1534.7 350.3 1538.2 347.6C1541.8 344.9 1546.5 344.0 1550.7 345.8C1554.8 347.6 1560.0 352.6 1563.1 358.2C1566.2 363.9 1568.7 372.7 1569.3 379.5C1569.9 386.3 1568.8 393.7 1566.6 399.0C1564.4 404.4 1560.4 408.5 1556.0 411.5C1551.5 414.4 1545.3 417.1 1540.0 416.8C1534.7 416.5 1528.5 412.9 1524.0 409.7C1519.6 406.4 1515.8 401.7 1513.4 397.3C1511.0 392.8 1509.0 387.5 1509.9 383.1Z" fill="url(#gE)" /><path d="M1467.3 361.8C1466.1 359.1 1468.2 355.3 1470.8 351.1C1473.5 347.0 1479.1 340.0 1483.2 336.9C1487.4 333.8 1491.2 333.0 1495.7 332.5C1500.1 332.1 1505.7 332.7 1509.9 334.3C1514.0 335.9 1517.2 339.2 1520.5 342.3C1523.7 345.4 1528.2 349.7 1529.4 352.9C1530.6 356.2 1529.4 358.8 1527.6 361.8C1525.8 364.7 1522.3 368.6 1518.7 370.7C1515.2 372.7 1511.0 374.2 1506.3 374.2C1501.6 374.2 1495.1 371.8 1490.3 370.7C1485.6 369.5 1481.8 368.6 1477.9 367.1C1474.1 365.6 1468.5 364.4 1467.3 361.8Z" fill="#484848" /><path d="M1495.7 332.5C1496.5 331.2 1505.7 332.7 1509.9 334.3C1514.0 335.9 1517.2 339.2 1520.5 342.3C1523.7 345.4 1528.2 350.0 1529.4 352.9C1530.6 355.9 1529.7 360.3 1527.6 360.0C1525.5 359.7 1520.8 354.1 1516.9 351.1C1513.1 348.2 1508.1 345.4 1504.5 342.3C1501.0 339.2 1494.8 333.8 1495.7 332.5Z" fill="#262626" /><path d="M1489.4 343.2L1485.0 365.3" fill="none" stroke="#2a2a2a" stroke-width="1.6" stroke-linecap="round" opacity="1"/><path d="M1499.2 343.2L1494.8 365.3" fill="none" stroke="#2a2a2a" stroke-width="1.6" stroke-linecap="round" opacity="1"/><path d="M1509.0 343.2L1504.5 365.3" fill="none" stroke="#2a2a2a" stroke-width="1.6" stroke-linecap="round" opacity="1"/><path d="M1518.7 343.2L1514.3 365.3" fill="none" stroke="#2a2a2a" stroke-width="1.6" stroke-linecap="round" opacity="1"/><path d="M1479.7 365.3C1479.8 364.9 1485.9 368.4 1490.3 369.8C1494.8 371.1 1501.6 373.3 1506.3 373.3C1511.0 373.3 1516.9 369.9 1518.7 369.8C1520.5 369.6 1519.0 371.4 1516.9 372.4C1514.9 373.5 1510.9 376.0 1506.3 376.0C1501.7 376.0 1493.9 374.2 1489.4 372.4C1485.0 370.7 1479.5 365.8 1479.7 365.3Z" fill="#202020" /><path d="M1216.5 477.2C1216.6 469.9 1217.2 461.3 1219.1 454.6C1221.0 448.0 1224.6 441.9 1227.8 437.3C1230.9 432.6 1235.3 429.2 1238.2 426.9C1241.1 424.5 1242.8 422.8 1245.1 423.4C1247.4 424.0 1249.7 426.6 1252.1 430.3C1254.4 434.1 1256.1 440.7 1259.0 445.9C1261.9 451.1 1266.5 458.4 1269.4 461.6C1272.3 464.7 1275.8 461.3 1276.4 465.0C1276.9 468.8 1274.9 478.0 1272.9 484.1C1270.9 490.2 1266.5 495.7 1264.2 501.5C1261.9 507.3 1260.2 513.0 1259.0 518.8C1257.8 524.6 1257.1 530.7 1257.3 536.2C1257.4 541.7 1258.3 547.2 1259.9 551.8C1261.5 556.4 1264.5 560.5 1266.8 563.9C1269.1 567.4 1272.5 569.7 1273.8 572.6C1275.1 575.5 1275.3 579.3 1274.6 581.3C1273.9 583.3 1271.4 585.1 1269.4 584.8C1267.4 584.5 1264.5 581.3 1262.5 579.6C1260.4 577.8 1259.3 574.4 1257.3 574.4C1255.2 574.4 1251.8 577.7 1250.3 579.6C1248.9 581.4 1250.3 584.3 1248.6 585.6C1246.9 586.9 1242.8 587.5 1239.9 587.4C1237.0 587.2 1233.6 586.7 1231.2 584.8C1228.9 582.9 1227.0 579.9 1226.0 576.1C1225.0 572.3 1225.0 567.4 1225.2 562.2C1225.3 557.0 1227.3 552.1 1226.9 544.9C1226.5 537.6 1224.0 526.6 1222.6 518.8C1221.1 511.0 1219.2 504.9 1218.2 498.0C1217.2 491.1 1216.3 484.4 1216.5 477.2Z" fill="url(#gArm)" /><path d="M1240.8 437.3C1240.2 440.7 1237.3 450.3 1237.3 458.1C1237.3 465.9 1239.2 475.2 1240.8 484.1C1242.4 493.1 1245.3 503.2 1246.9 511.9C1248.4 520.6 1249.7 532.1 1250.3 536.2" fill="none" stroke="#2e2e2e" stroke-width="2.5" stroke-linecap="round" opacity="0.8"/><path d="M1265.9 461.6C1266.5 464.2 1270.3 470.5 1269.4 477.2C1268.5 483.8 1262.9 494.5 1260.7 501.5C1258.6 508.4 1257.1 515.9 1256.4 518.8" fill="none" stroke="#1e1e1e" stroke-width="4" stroke-linecap="round" opacity="0.8"/><path d="M1243.4 419.9C1243.7 416.0 1249.6 406.0 1252.1 406.0C1254.5 406.0 1257.1 414.7 1258.1 419.9C1259.1 425.1 1259.4 435.7 1258.1 437.3C1256.8 438.9 1252.8 432.3 1250.3 429.5C1247.9 426.6 1243.1 423.8 1243.4 419.9Z" fill="#333" /><path d="M1257.3 437.3C1255.8 432.9 1252.3 428.6 1252.1 423.4C1251.8 418.2 1252.9 411.5 1255.5 406.0C1258.1 400.5 1264.8 390.7 1267.7 390.4C1270.6 390.1 1269.1 400.5 1272.9 404.3C1276.6 408.1 1284.5 411.2 1290.2 413.0C1296.0 414.7 1301.8 415.6 1307.6 414.7C1313.4 413.8 1322.6 406.9 1324.9 407.8C1327.3 408.6 1323.8 415.6 1321.5 419.9C1319.2 424.3 1315.1 429.2 1311.1 433.8C1307.0 438.4 1302.1 443.6 1297.2 447.7C1292.3 451.7 1286.2 456.1 1281.6 458.1C1276.9 460.1 1272.9 461.3 1269.4 459.8C1265.9 458.4 1262.8 453.2 1260.7 449.4C1258.7 445.7 1258.7 441.6 1257.3 437.3Z" fill="url(#gBic)" /><path d="M1272.0 371.9C1273.7 366.2 1276.0 361.7 1279.5 358.4C1283.0 355.2 1288.0 352.9 1293.0 352.4C1298.0 351.9 1303.7 354.2 1309.4 355.4C1315.2 356.7 1322.4 357.9 1327.4 359.9C1332.4 361.9 1337.7 363.9 1339.4 367.4C1341.1 370.9 1339.4 376.2 1337.9 380.9C1336.4 385.6 1333.4 391.4 1330.4 395.9C1327.4 400.4 1324.2 404.6 1319.9 407.9C1315.7 411.1 1310.4 414.1 1304.9 415.4C1299.5 416.6 1292.2 416.6 1287.0 415.4C1281.7 414.1 1276.5 411.6 1273.5 407.9C1270.5 404.1 1269.2 398.9 1269.0 392.9C1268.7 386.9 1270.2 377.7 1272.0 371.9Z" fill="url(#gPad)" /><path d="M1274.2 408.6C1276.4 409.9 1281.8 414.9 1287.0 416.1C1292.1 417.4 1299.5 417.4 1304.9 416.1C1310.4 414.9 1315.7 411.9 1319.9 408.6C1324.2 405.4 1327.4 401.1 1330.4 396.6C1333.5 392.1 1336.9 384.1 1338.2 381.6" fill="none" stroke="#1c1c1c" stroke-width="3.5" stroke-linecap="round" opacity="1"/></g><g><ellipse cx="1365.3" cy="207.7" rx="35" ry="5.500" transform="rotate(-10 1365.3 207.7)" fill="none" stroke="#5ccdf5" stroke-width="1.100"/><path d="M1343.8 307.4C1342.2 308.0 1334.2 309.2 1333.8 311.1C1333.3 313.0 1336.7 315.3 1341.3 318.7C1346.0 322.1 1354.8 328.4 1361.5 331.3C1368.2 334.3 1375.4 335.7 1381.7 336.4C1388.0 337.0 1394.5 336.4 1399.4 335.1C1404.2 333.8 1408.3 331.5 1410.7 328.8C1413.2 326.1 1413.5 320.4 1414.0 318.7" fill="none" stroke="#5ccdf5" stroke-width="0.97"/><path d="M1304.7 347.7C1302.0 347.3 1293.2 344.2 1288.3 345.2C1283.5 346.3 1279.0 349.6 1275.7 354.0C1272.4 358.5 1269.3 365.4 1268.6 371.7C1268.0 378.0 1269.1 386.0 1271.9 391.9C1274.8 397.8 1280.1 403.2 1285.8 407.0C1291.5 410.8 1299.7 413.3 1306.0 414.6C1312.3 415.9 1319.2 415.2 1323.7 414.6C1328.1 414.0 1331.0 411.5 1332.5 410.8" fill="none" stroke="#ff1414" stroke-width="0.97"/><path d="M1307.3 338.9C1308.5 337.0 1311.3 330.7 1314.8 327.5C1318.4 324.4 1323.9 320.4 1328.7 320.0C1333.5 319.5 1338.8 321.4 1343.8 325.0C1348.9 328.6 1354.6 334.9 1359.0 341.4C1363.4 347.9 1367.8 356.6 1370.3 364.1C1372.9 371.7 1373.5 383.1 1374.1 386.8" fill="none" stroke="#ff1414" stroke-width="0.97"/><path d="M1336.3 321.2C1338.8 322.9 1346.8 326.3 1351.4 331.3C1356.0 336.4 1360.8 344.4 1364.0 351.5C1367.3 358.7 1369.8 368.3 1371.1 374.2C1372.4 380.1 1371.1 384.7 1371.6 386.8C1372.1 388.9 1373.7 386.8 1374.1 386.8" fill="none" stroke="#ff1414" stroke-width="0.97"/><path d="M1261.8 423.4L1277.0 420.9" fill="none" stroke="#ff1414" stroke-width="1.23"/><path d="M1268.6 413.3L1270.2 431.0" fill="none" stroke="#ff1414" stroke-width="1.23"/><path d="M1213.9 439.8C1215.8 439.4 1220.8 437.3 1225.2 437.3C1229.7 437.3 1234.9 438.2 1240.4 439.8C1245.8 441.5 1257.2 446.2 1258.0 447.4C1258.9 448.7 1250.9 447.8 1245.4 447.4C1240.0 447.0 1230.5 446.2 1225.2 444.9C1220.0 443.6 1215.8 440.7 1213.9 439.8" fill="none" stroke="#ff1414" stroke-width="0.97"/><path d="M1418.3 306.1C1420.6 307.8 1428.2 311.6 1432.2 316.2C1436.2 320.8 1439.7 328.0 1442.3 333.8C1444.8 339.7 1446.3 346.0 1447.3 351.5C1448.4 357.0 1448.4 364.1 1448.6 366.7" fill="none" stroke="#14f014" stroke-width="0.97"/><path d="M1422.1 307.4C1424.4 309.7 1432.4 315.6 1436.0 321.2C1439.5 326.9 1441.9 333.8 1443.5 341.4C1445.2 349.0 1445.2 362.5 1446.1 366.7C1446.9 370.9 1448.2 366.7 1448.6 366.7" fill="none" stroke="#14f014" stroke-width="0.97"/><path d="M1428.4 331.3C1429.9 328.8 1433.9 320.2 1437.2 316.2C1440.6 312.2 1445.4 308.4 1448.6 307.4C1451.7 306.3 1454.5 307.8 1456.2 309.9C1457.8 312.0 1458.3 318.3 1458.7 320.0" fill="none" stroke="#14f014" stroke-width="0.97"/><path d="M1554.5 352.0A35.5 35.5 0 1 1 1508.9 393.1" fill="none" stroke="#14f014" stroke-width="1.100"/><ellipse cx="1502.8" cy="357.3" rx="36.4" ry="21.6" transform="rotate(6 1502.8 357.3)" fill="none" stroke="#14f014" stroke-width="1"/><ellipse cx="1474.7" cy="351.1" rx="8.9" ry="8.0" transform="rotate(0 1474.7 351.1)" fill="none" stroke="#14f014" stroke-width="1"/><ellipse cx="1521.4" cy="355.6" rx="17.7" ry="17.7" transform="rotate(0 1521.4 355.6)" fill="none" stroke="#14f014" stroke-width="1"/><path d="M1522.3 340.5C1524.0 341.4 1530.5 343.5 1532.9 345.8C1535.3 348.2 1537.0 351.4 1536.8 354.7C1536.7 357.9 1534.3 362.1 1532.0 365.3C1529.8 368.6 1524.6 372.7 1523.2 374.2" fill="none" stroke="#f0e050" stroke-width="1.06"/><path d="M1477.9 363.6L1483.2 369.8L1488.6 368.0L1493.9 373.3L1499.2 370.7L1504.5 375.1L1509.9 371.5L1515.2 376.0L1518.7 370.7L1520.5 365.3" fill="none" stroke="#14f014" stroke-width="0.88"/><path d="M1321.1 428.5L1345.1 429.7L1376.7 431.0L1483.9 398.2L1484.7 411.6L1379.2 443.1L1307.3 441.1" fill="none" stroke="#f0e050" stroke-width="1.06"/><path d="M1376.7 431.0L1379.2 443.1" fill="none" stroke="#f0e050" stroke-width="1.06"/><path d="M1457.4 399.0L1483.9 398.2" fill="none" stroke="#f0e050" stroke-width="1.06"/><path d="M1331.2 451.2L1346.4 451.7" fill="none" stroke="#a02c0c" stroke-width="0.97"/><path d="M1351.4 456.2L1381.7 451.2L1396.8 449.9L1417.0 448.7L1427.1 442.4L1442.3 438.6L1457.4 436.1L1459.9 432.3L1454.9 424.7L1465.0 422.2" fill="none" stroke="#a02c0c" stroke-width="0.97"/><path d="M1337.4 484.0A62 19.500 0 0 0 1461.4 484.0" fill="none" stroke="#f0e050" stroke-width="1.200"/><path d="M1351.4 473.9L1348.9 484.0L1342.6 491.6L1351.4 496.6L1366.6 504.2L1386.8 506.7L1406.9 509.2L1417.0 504.2L1434.7 501.7L1446.1 496.6" fill="none" stroke="#a02c0c" stroke-width="0.97"/><path d="M1446.1 482.7L1448.6 484.0L1448.6 486.5L1446.1 487.3" fill="none" stroke="#5ccdf5" stroke-width="1.06"/><path d="M1345.1 515.3L1326.2 520.4L1321.1 530.5L1353.9 553.2" fill="none" stroke="#f0e050" stroke-width="1.06"/><path d="M1326.2 520.4L1357.7 546.9" fill="none" stroke="#f0e050" stroke-width="1.06"/><path d="M1446.1 527.9L1463.7 539.3L1466.2 548.1L1401.9 572.1" fill="none" stroke="#f0e050" stroke-width="1.06"/><path d="M1463.7 539.3L1395.6 562.0" fill="none" stroke="#f0e050" stroke-width="1.06"/><path d="M1347.6 514.1L1344.4 517.9L1345.1 521.6" fill="none" stroke="#1414ff" stroke-width="1.23"/><path d="M1443.5 517.9L1452.4 516.6L1452.4 521.6L1446.1 524.2" fill="none" stroke="#1414ff" stroke-width="1.23"/><path d="M1336.3 549.4L1333.8 555.7L1337.5 559.5L1351.4 558.7L1354.4 554.4L1347.6 553.2L1341.3 551.4Z" fill="none" stroke="#1414ff" stroke-width="1.23"/><path d="M1427.1 557.0L1434.7 553.7L1447.3 554.4L1446.1 562.0L1436.0 561.3L1430.9 559.5Z" fill="none" stroke="#1414ff" stroke-width="1.23"/><path d="M1401.9 574.6L1412.0 577.2L1422.1 568.3L1437.2 564.5L1446.1 564.5" fill="none" stroke="#a02c0c" stroke-width="0.97"/><path d="M1336.3 553.2L1341.3 557.0L1348.9 555.7" fill="none" stroke="#a02c0c" stroke-width="0.88"/><path d="M1218.9 538.0L1240.4 540.6L1261.8 544.4" fill="none" stroke="#ff1414" stroke-width="1.23"/><path d="M1220.2 545.6L1240.4 548.6L1259.3 552.7" fill="none" stroke="#f0e050" stroke-width="1.41"/><path d="M1226.5 575.9L1230.3 584.7L1237.9 583.5L1244.2 589.0L1247.9 584.7" fill="none" stroke="#ff1414" stroke-width="0.97"/><ellipse cx="1265.1" cy="573.4" rx="10" ry="8" transform="rotate(-30 1265.1 573.4)" fill="none" stroke="#ff1414" stroke-width="1.100"/><path d="M1263.1 560.8L1267.6 564.5L1266.1 570.9" fill="none" stroke="#ff1414" stroke-width="0.97"/><path d="M1329.2 586.0L1342.6 581.7" fill="none" stroke="#ff1414" stroke-width="1.14"/><path d="M1335.0 576.4L1336.3 591.5" fill="none" stroke="#ff1414" stroke-width="1.14"/><path d="M1335.8 627.6L1351.4 622.1L1361.5 621.3" fill="none" stroke="#5cf0b0" stroke-width="1.06"/><path d="M1335.8 627.6L1355.2 710.9L1370.3 707.1" fill="none" stroke="#5cf0b0" stroke-width="1.06"/><path d="M1346.4 626.4L1357.7 704.6" fill="none" stroke="#5cf0b0" stroke-width="1.06"/><path d="M1356.5 673.1L1385.5 666.2" fill="none" stroke="#5cf0b0" stroke-width="1.06"/><path d="M1351.4 686.4L1381.7 678.1" fill="none" stroke="#5cf0b0" stroke-width="1.06"/><path d="M1371.6 677.4L1376.2 680.6L1373.6 683.9" fill="none" stroke="#5cf0b0" stroke-width="0.97"/><ellipse cx="1399.400" cy="773.300" rx="104.300" ry="56.400" fill="none" stroke="#1414ff" stroke-width="1.300"/><path d="M1398.4 800.2L1383.3 805.4L1384.5 831.4L1424.4 885.2L1468.3 870.5L1447.8 822.8L1428.7 802.8" fill="none" stroke="#ff1414" stroke-width="1.06"/><path d="M1383.3 805.4L1408.8 834.0L1424.4 885.2" fill="none" stroke="#ff1414" stroke-width="1.06"/><path d="M1408.8 834.0L1425.6 828.5" fill="none" stroke="#ff1414" stroke-width="1.06"/><path d="M1435.3 825.4L1447.8 822.8" fill="none" stroke="#ff1414" stroke-width="1.06"/><path d="M1407.0 864.4C1407.8 862.8 1408.6 858.0 1411.4 854.9C1414.1 851.7 1419.2 847.9 1423.5 845.3C1427.9 842.7 1433.4 840.5 1437.4 839.2C1441.5 837.9 1444.9 836.9 1447.8 837.5C1450.7 838.1 1453.6 841.8 1454.8 842.7" fill="none" stroke="#ff1414" stroke-width="1.06"/><path d="M1433.9 835.8L1437.4 837.5L1438.8 844.4" fill="none" stroke="#ff1414" stroke-width="0.97"/><path d="M1501.1 678.9L1542.7 663.2" fill="none" stroke="#ff1414" stroke-width="1.06"/><path d="M1515.5 647.1L1529.8 694.0" fill="none" stroke="#ff1414" stroke-width="1.06"/><path d="M1475.1 832.6L1509.8 822.4" fill="none" stroke="#14f014" stroke-width="1.06"/><path d="M1484.3 809.2L1500.8 844.4" fill="none" stroke="#14f014" stroke-width="1.06"/><path d="M1485.5 835.8L1500.8 818.4" fill="none" stroke="#14f014" stroke-width="1.06"/></g><g style="filter:brightness(1.13)"><path d="M1394.9 675.2C1391.6 677.0 1390.0 680.8 1387.1 684.4C1384.2 688.1 1380.1 692.0 1377.5 696.9C1375.0 701.9 1372.7 709.1 1371.8 714.3C1370.9 719.5 1371.4 723.8 1372.0 728.2C1372.6 732.5 1373.1 735.4 1375.3 740.3C1377.5 745.2 1381.9 752.2 1385.4 757.7C1388.8 763.2 1393.5 767.8 1395.8 773.3C1398.1 778.8 1398.5 785.4 1399.2 790.7C1400.0 795.9 1400.5 800.2 1400.1 804.5C1399.7 808.9 1397.8 812.9 1396.6 816.7C1395.5 820.4 1393.3 823.6 1393.2 827.1C1393.0 830.6 1394.2 833.5 1395.8 837.5C1397.4 841.6 1400.4 847.0 1402.7 851.4C1405.0 855.7 1407.3 860.4 1409.7 863.5C1412.0 866.7 1413.7 868.3 1416.6 870.5C1419.5 872.6 1423.0 875.4 1427.0 876.6C1431.1 877.7 1436.8 877.9 1440.9 877.4C1444.9 877.0 1448.8 876.3 1451.3 873.9C1453.8 871.6 1454.9 867.3 1455.6 863.5C1456.4 859.8 1456.9 855.4 1455.6 851.4C1454.3 847.3 1450.6 843.0 1447.8 839.2C1445.1 835.5 1441.8 832.9 1439.2 828.8C1436.6 824.8 1434.5 820.2 1432.2 814.9C1429.9 809.7 1427.3 803.4 1425.3 797.6C1423.2 791.8 1421.5 786.6 1420.1 780.2C1418.6 773.9 1416.7 765.8 1416.6 759.4C1416.4 753.1 1418.2 747.8 1419.2 742.1C1420.2 736.3 1422.2 730.5 1422.7 724.7C1423.1 718.9 1422.3 712.6 1421.8 707.4C1421.3 702.1 1420.5 697.3 1419.7 693.5C1418.9 689.7 1419.1 687.7 1416.9 684.4C1414.8 681.2 1410.7 675.6 1407.0 674.0C1403.4 672.5 1398.2 673.5 1394.9 675.2Z" fill="url(#gD)"/><path d="M1420.9 700.4C1420.6 704.5 1420.2 716.9 1419.2 724.7C1418.2 732.5 1415.4 740.0 1414.9 747.3C1414.3 754.5 1414.6 760.3 1415.7 768.1C1416.9 775.9 1419.3 786.0 1421.8 794.1C1424.3 802.2 1427.3 810.0 1430.5 816.7C1433.7 823.3 1439.2 831.1 1440.9 834.0" fill="none" stroke="#262626" stroke-width="5" opacity=".7"/><path d="M1394.0 821.9C1393.2 824.8 1395.5 833.5 1397.5 839.2C1399.5 845.0 1403.0 851.4 1406.2 856.6C1409.4 861.8 1413.7 867.6 1416.6 870.5C1419.5 873.4 1423.8 876.3 1423.5 873.9C1423.2 871.6 1417.6 862.4 1414.9 856.6C1412.1 850.8 1409.1 845.0 1407.0 839.2C1405.0 833.5 1404.9 824.8 1402.7 821.9C1400.5 819.0 1394.9 819.0 1394.0 821.9Z" fill="#242424"/><path d="M1399.4 661.7C1400.8 657.7 1405.7 655.4 1409.5 655.4C1413.2 655.4 1419.6 658.5 1422.1 661.7C1424.5 664.9 1424.9 670.5 1424.1 674.3C1423.3 678.1 1420.1 682.1 1417.0 684.4C1414.0 686.7 1408.4 689.0 1405.7 688.2C1402.9 687.4 1401.7 683.8 1400.6 679.4C1399.6 675.0 1397.9 665.7 1399.4 661.7Z" fill="url(#gE)"/></g><path d="M1408.8 834.0L1424.4 885.2" stroke="#ff1414" stroke-width="1.200" fill="none"/><path d="M1408.8 834.0L1425.6 828.5" stroke="#ff1414" stroke-width="1.200" fill="none"/><path d="M1407.0 864.4C1407.8 862.8 1408.6 858.0 1411.4 854.9C1414.1 851.7 1419.2 847.9 1423.5 845.3C1427.9 842.7 1433.4 840.5 1437.4 839.2C1441.5 837.9 1444.9 836.9 1447.8 837.5C1450.7 838.1 1453.6 841.8 1454.8 842.7" stroke="#ff1414" stroke-width="1.200" fill="none"/><g><path d="M2067.500 145L2142 131.500 2197 156 2192 238 2113.500 266.500 2072.500 225Z" fill="#676767" stroke="#626262" stroke-width="1.500" stroke-linejoin="round"/><path d="M2074.700 146.200L2142.800 133.400 2188.300 155.400 2113 172.500Z" fill="#afafaf"/><path d="M2069.700 152.600L2108.800 178.100 2110.900 259 2073.300 222.800Z" fill="url(#cl)"/><path d="M2114.500 179.600L2194.700 159.700 2190.400 236.300 2115.200 263.300Z" fill="url(#cf)"/><g style="filter:blur(.4px)"><text transform="matrix(.885 -.256 0 1 2125.500 226)" font-family="Liberation Sans,DejaVu Sans,sans-serif" font-size="18.700" fill="#474c56" stroke="#474c56" stroke-width=".5" letter-spacing=".5">FRONT</text><text transform="matrix(.66 .5 0 1.080 2079 202)" font-family="Liberation Sans,DejaVu Sans,sans-serif" font-size="14" fill="#555a64" stroke="#555a64" stroke-width=".4">LEFT</text><text transform="matrix(1.320 -.26 .62 .4 2115.500 154.500)" font-family="Liberation Sans,DejaVu Sans,sans-serif" font-size="13" fill="#777b80" stroke="#777b80" stroke-width=".5">TOP</text></g></g><g font-family="DejaVu Sans,Liberation Sans,sans-serif" font-weight="bold" font-size="17"><path d="M661.500 1002V1026.500" stroke="#14e614" stroke-width="1.200"/><path d="M661.500 1026.500L686 1021" stroke="#e61414" stroke-width="1.200"/><path d="M661.500 1026.500L675 1037" stroke="#1414e6" stroke-width="1.200"/><text x="655" y="994" fill="#14f014">y</text><text x="682" y="1017" fill="#ff1414">x</text><text x="671" y="1035" fill="#1414ff">z</text></g><text x="1391" y="1055" font-family="DejaVu Sans,Liberation Sans,sans-serif" font-weight="bold" font-size="16.500" fill="#f0f0f0" textLength="53">persp</text></svg>
</body></html>
